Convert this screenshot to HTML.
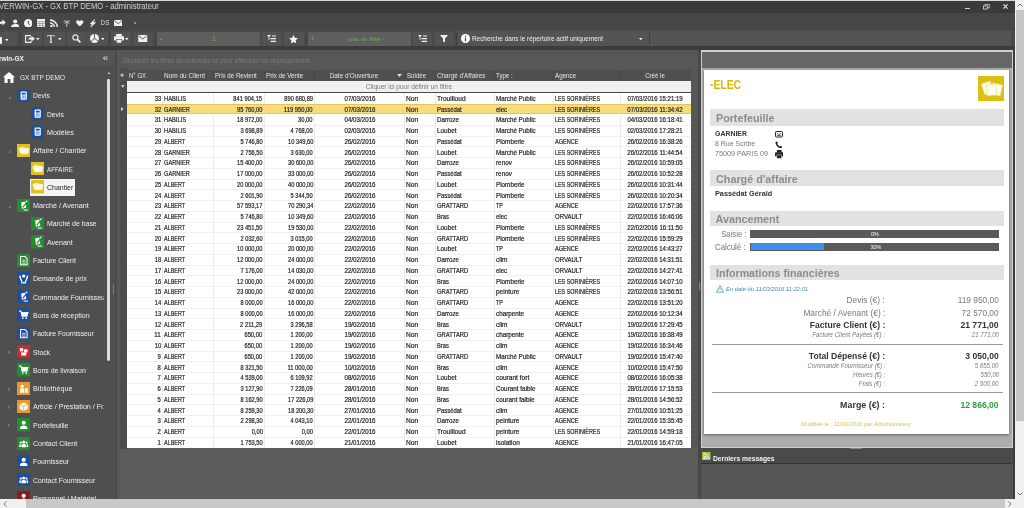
<!DOCTYPE html>
<html lang="fr"><head><meta charset="utf-8"><title>EVERWIN-GX - GX BTP DEMO - administrateur</title>
<style>
html,body{margin:0;padding:0}
body{width:1024px;height:508px;overflow:hidden;position:relative;background:#555;font-family:"Liberation Sans",sans-serif}
#app div,#app span.t,#app svg{position:absolute}
#app span.t{white-space:nowrap;line-height:12px;height:12px}
#app{position:absolute;left:0;top:0;width:1024px;height:508px;overflow:hidden;will-change:transform}
</style></head><body><div id="app">
<div style="left:0px;top:0px;width:1015px;height:1px;background:#d8d8d8;"></div>
<div style="left:0px;top:1px;width:1015px;height:12px;background:#3a3a3a;"></div>
<div style="left:0px;top:13px;width:1015px;height:17px;background:#464646;"></div>
<div style="left:0px;top:30px;width:1015px;height:16px;background:#4a4a4a;"></div>
<div style="left:0px;top:46px;width:1015px;height:4px;background:#3c3c3c;"></div>
<div style="left:0px;top:50px;width:1015px;height:449px;background:#555555;"></div>
<span class="t" style="top:0.3px;font-size:8.6px;color:#d0d0d0;left:-1px;transform-origin:0 50%;transform:scaleX(0.894);">VERWIN-GX - GX BTP DEMO - administrateur</span>
<div style="left:965px;top:7.6px;width:4.5px;height:1px;background:#d4d4d4;"></div>
<svg style="left:982.5px;top:3.5px" width="7" height="6.2" viewBox="0 0 9 8"><rect x="0.5" y="2.5" width="5" height="4" fill="none" stroke="#ddd" stroke-width="1"/><path d="M2.5 2.5V0.5H8V5H5.5" fill="none" stroke="#ddd" stroke-width="1"/></svg>
<svg style="left:1002.5px;top:4px" width="5" height="5" viewBox="0 0 6 6"><path d="M0.5 0.5L5.5 5.5M5.5 0.5L0.5 5.5" stroke="#e0e0e0" stroke-width="1.4"/></svg>
<svg style="left:-3.4px;top:19px" width="9" height="8.5" viewBox="0 0 9 9"><path d="M0.5 8.5C0.8 4.2 3.2 2.4 5.6 2.4V0.2L9 3.6L5.6 7V4.8C3.6 4.8 1.8 5.8 0.5 8.5Z" fill="#f2f2f2"/></svg>
<svg style="left:10.7px;top:18.8px" width="8.4" height="8.6" viewBox="0 0 9 9"><circle cx="4.5" cy="2.5" r="2.2" fill="#f2f2f2"/><path d="M0 9C0 6 2 5.2 4.5 5.2S9 6 9 9Z" fill="#f2f2f2"/></svg>
<svg style="left:23.7px;top:18.8px" width="8.5" height="8.5" viewBox="0 0 9 9"><circle cx="4.5" cy="4.5" r="4.5" fill="#f2f2f2"/><path d="M4.5 2V4.8L6.3 6" fill="none" stroke="#444" stroke-width="1"/></svg>
<svg style="left:36.5px;top:18.8px" width="8.5" height="8.5" viewBox="0 0 9 9"><rect width="9" height="9" fill="#f2f2f2"/><path d="M0 2.6H9M3 2.6V9M6 2.6V9M0 4.8H9M0 7H9" stroke="#666" stroke-width=".5" fill="none"/></svg>
<svg style="left:49.6px;top:18.8px" width="8.3" height="8.5" viewBox="0 0 9 9"><circle cx="1.4" cy="7.6" r="1.3" fill="#f2f2f2"/><path d="M0 4.3A4.7 4.7 0 0 1 4.7 9M0 1A8 8 0 0 1 8 9" fill="none" stroke="#f2f2f2" stroke-width="1.5"/></svg>
<svg style="left:63.3px;top:19px" width="7.4" height="8" viewBox="0 0 9 9"><path d="M4.8 3.5C5 5.5 4.8 7 4.3 9" stroke="#f2f2f2" stroke-width="1" fill="none"/><path d="M4.8 3.2C3.5 1.5 2 1.5 0.8 2.6M4.8 3.2C6 1.3 7.6 1.5 8.6 2.8M4.8 3.2C3.6 3 2.4 3.8 2 5.2M4.8 3.2C6 3 7 3.8 7.4 5.2" stroke="#f2f2f2" stroke-width=".9" fill="none"/></svg>
<svg style="left:76px;top:19.6px" width="7.5" height="6.6" viewBox="0 0 10 9"><path d="M5 9L0.8 4.6C-0.6 3 0.2 0.4 2.5 0.4C3.8 0.4 4.6 1.2 5 2C5.4 1.2 6.2 0.4 7.5 0.4C9.8 0.4 10.6 3 9.2 4.6Z" fill="#f2f2f2"/></svg>
<svg style="left:89px;top:18.7px" width="7.4" height="8.6" viewBox="0 0 7 9"><path d="M5.8 0L0.6 5.2H3L1 9L6.8 3.6H4.2Z" fill="#f2f2f2" stroke="#f2f2f2" stroke-width=".4"/></svg>
<span class="t" style="top:17px;font-size:7px;color:#d8d8d8;left:-195px;width:600px;text-align:center;transform-origin:50% 50%;transform:scaleX(0.9);">DS</span>
<svg style="left:114px;top:19.7px" width="8.4" height="6.4" viewBox="0 0 9 7"><rect width="9" height="7" rx=".6" fill="#f2f2f2"/><path d="M0.6 0.8L4.5 4L8.4 0.8" stroke="#444" stroke-width=".9" fill="none"/></svg>
<div style="left:133.6px;top:22px;width:2.2px;height:2px;background:#8c8c8c;"></div>
<div style="left:0px;top:31.5px;width:17px;height:14px;background:#525252;border-radius:1px"></div>
<div style="left:-2px;top:36.5px;width:3.9px;height:7.5px;background:#f2f2f2;border-radius:1px"></div>
<svg style="left:4.7px;top:39px" width="3.6" height="2.2" viewBox="0 0 4 2.4"><path d="M0 0H4L2 2.4Z" fill="#f2f2f2"/></svg>
<div style="left:19.3px;top:33px;width:1px;height:12px;background:#3e3e3e;"></div>
<div style="left:22.5px;top:31.5px;width:19px;height:14px;background:#525252;border-radius:1px"></div>
<svg style="left:25px;top:34.5px" width="10" height="8" viewBox="0 0 10 8"><path d="M6 0.6H0.6V7.4H6V6" fill="none" stroke="#f2f2f2" stroke-width="1.1"/><path d="M3 4.6C3.6 3 5 2.4 6.4 2.6V1L10 3.8L6.4 6.6V4.8C5 4.6 4 4.6 3 4.6Z" fill="#f2f2f2"/></svg>
<svg style="left:36.2px;top:38px" width="3.6" height="2.2" viewBox="0 0 4 2.4"><path d="M0 0H4L2 2.4Z" fill="#f2f2f2"/></svg>
<div style="left:44px;top:31.5px;width:21px;height:14px;background:#525252;border-radius:1px"></div>
<span class="t" style="top:32.5px;font-size:12px;color:#f2f2f2;left:-249px;width:600px;text-align:center;transform-origin:50% 50%;font-family:&quot;Liberation Serif&quot;,serif;">T</span>
<svg style="left:57.7px;top:38px" width="3.6" height="2.2" viewBox="0 0 4 2.4"><path d="M0 0H4L2 2.4Z" fill="#f2f2f2"/></svg>
<div style="left:66.5px;top:31.5px;width:19px;height:14px;background:#525252;border-radius:1px"></div>
<svg style="left:71.5px;top:34px" width="9" height="9" viewBox="0 0 9 9"><circle cx="3.4" cy="3.4" r="2.6" fill="none" stroke="#f2f2f2" stroke-width="1.2"/><path d="M5.4 5.4L8.4 8.4" stroke="#f2f2f2" stroke-width="1.6"/></svg>
<div style="left:87px;top:31.5px;width:21px;height:14px;background:#525252;border-radius:1px"></div>
<svg style="left:89.5px;top:34px" width="9" height="9" viewBox="0 0 9 9"><circle cx="4.5" cy="4.5" r="4.5" fill="#f2f2f2"/><path d="M4.5 0V4.5L8.3 7M4.5 4.5L1 7.4" stroke="#4a4a4a" stroke-width=".9" fill="none"/></svg>
<svg style="left:100.7px;top:38px" width="3.6" height="2.2" viewBox="0 0 4 2.4"><path d="M0 0H4L2 2.4Z" fill="#f2f2f2"/></svg>
<div style="left:109px;top:33px;width:1px;height:12px;background:#3e3e3e;"></div>
<div style="left:111px;top:31.5px;width:20px;height:14px;background:#525252;border-radius:1px"></div>
<svg style="left:114px;top:34px" width="10" height="9" viewBox="0 0 10 9"><rect x="2.2" y="0" width="5.6" height="2.4" fill="#f2f2f2"/><rect x="0" y="2.2" width="10" height="4.4" rx=".8" fill="#f2f2f2"/><rect x="2.2" y="5.4" width="5.6" height="3.6" fill="#f2f2f2" stroke="#4a4a4a" stroke-width=".6"/></svg>
<svg style="left:125.2px;top:38px" width="3.6" height="2.2" viewBox="0 0 4 2.4"><path d="M0 0H4L2 2.4Z" fill="#f2f2f2"/></svg>
<div style="left:133.5px;top:31.5px;width:19px;height:14px;background:#525252;border-radius:1px"></div>
<svg style="left:138px;top:35px" width="9.5" height="7" viewBox="0 0 9 7"><rect width="9" height="7" rx=".6" fill="#f2f2f2"/><path d="M0.6 0.8L4.5 4L8.4 0.8" stroke="#4a4a4a" stroke-width=".9" fill="none"/></svg>
<div style="left:154.5px;top:33px;width:1px;height:12px;background:#3e3e3e;"></div>
<div style="left:156.5px;top:32px;width:103.5px;height:13.5px;background:#5e5e5e;"></div>
<span class="t" style="top:32.5px;font-size:6px;color:#6fb04a;left:-139px;width:600px;text-align:center;transform-origin:50% 50%;">•</span>
<span class="t" style="top:32.5px;font-size:6.5px;color:#6fb04a;left:-86px;width:600px;text-align:center;transform-origin:50% 50%;">1</span>
<div style="left:262px;top:31.5px;width:19px;height:14px;background:#525252;border-radius:1px"></div>
<svg style="left:267px;top:35px" width="9" height="7.5" viewBox="0 0 9 7.5"><path d="M0 0H4L2 2.2Z" fill="#f2f2f2"/><path d="M2 2V5" stroke="#f2f2f2" stroke-width=".8"/><path d="M5 1H9M3.6 3.6H9M3.6 6.4H9" stroke="#f2f2f2" stroke-width="1.1"/></svg>
<div style="left:283.5px;top:31.5px;width:20px;height:14px;background:#525252;border-radius:1px"></div>
<svg style="left:289px;top:34.5px" width="9" height="8.5" viewBox="0 0 10 9.5"><path d="M5 0L6.5 3.2L10 3.6L7.4 6L8.1 9.5L5 7.7L1.9 9.5L2.6 6L0 3.6L3.5 3.2Z" fill="#f2f2f2"/></svg>
<div style="left:305.5px;top:33px;width:1px;height:12px;background:#3e3e3e;"></div>
<div style="left:307.5px;top:32px;width:103.5px;height:13.5px;background:#5e5e5e;"></div>
<span class="t" style="top:32.5px;font-size:7px;color:#6fb04a;left:12.5px;width:600px;text-align:center;transform-origin:50% 50%;">+</span>
<span class="t" style="top:32.5px;font-size:6.2px;color:#6fb04a;left:64.5px;width:600px;text-align:center;transform-origin:50% 50%;transform:scaleX(0.981);">- pas de filtre -</span>
<div style="left:412.5px;top:31.5px;width:19.5px;height:14px;background:#525252;border-radius:1px"></div>
<svg style="left:418px;top:35px" width="9" height="7.5" viewBox="0 0 9 7.5"><path d="M0 0H4L2 2.2Z" fill="#f2f2f2"/><path d="M2 2V5" stroke="#f2f2f2" stroke-width=".8"/><path d="M5 1H9M3.6 3.6H9M3.6 6.4H9" stroke="#f2f2f2" stroke-width="1.1"/></svg>
<div style="left:434.5px;top:31.5px;width:19px;height:14px;background:#525252;border-radius:1px"></div>
<svg style="left:440px;top:35px" width="8" height="7.5" viewBox="0 0 8 7.5"><path d="M0 0H8L5 3.4V7.5L3 6.2V3.4Z" fill="#f2f2f2"/></svg>
<div style="left:456px;top:33px;width:1px;height:12px;background:#3e3e3e;"></div>
<div style="left:458px;top:31px;width:553px;height:15px;background:#545454;"></div>
<svg style="left:461px;top:34px" width="9" height="9" viewBox="0 0 9 9"><circle cx="4.5" cy="4.5" r="4.5" fill="#fff"/><rect x="3.9" y="3.6" width="1.2" height="3.6" fill="#444"/><rect x="3.9" y="1.7" width="1.2" height="1.2" fill="#444"/></svg>
<span class="t" style="top:32.5px;font-size:6.7px;color:#f0f0f0;left:472px;transform-origin:0 50%;transform:scaleX(0.956);">Recherche dans le répertoire actif uniquement</span>
<svg style="left:639.2px;top:38px" width="3.6" height="2.2" viewBox="0 0 4 2.4"><path d="M0 0H4L2 2.4Z" fill="#f2f2f2"/></svg>
<div style="left:649px;top:33px;width:1px;height:12px;background:#3e3e3e;"></div>
<div style="left:0px;top:50px;width:114.5px;height:449px;background:#4f4f4f;"></div>
<div style="left:0px;top:50px;width:114.5px;height:16px;background:#545454;"></div>
<div style="left:114.5px;top:50px;width:2.5px;height:449px;background:#4a4a4a;"></div>
<span class="t" style="top:52.5px;font-size:7px;color:#f0f0f0;font-weight:bold;left:-1.5px;transform-origin:0 50%;transform:scaleX(0.926);">rwin-GX</span>
<span class="t" style="top:51.8px;font-size:9.5px;color:#e8e8e8;left:-194.7px;width:600px;text-align:center;transform-origin:50% 50%;">«</span>
<svg style="left:3px;top:72.2px" width="12" height="11" viewBox="0 0 12 11"><path d="M6 0L0 5.2H1.6V11H4.6V7H7.4V11H10.4V5.2H12Z" fill="#fff"/></svg>
<span class="t" style="top:71.7px;font-size:6.6px;color:#e8e8e8;left:20px;transform-origin:0 50%;transform:scaleX(0.985);">GX BTP DEMO</span>
<svg style="left:16.6px;top:88.8px" width="13.4" height="13.4" viewBox="0 0 13 13"><rect width="13" height="13" fill="#1c4f9c"/><rect x="3.5" y="2.5" width="6" height="8" rx="1" fill="#fff"/><rect x="4.6" y="3.6" width="3.8" height="1.8" fill="#1c4f9c"/><rect x="4.6" y="6.4" width="1" height="1" fill="#1c4f9c"/><rect x="6" y="6.4" width="1" height="1" fill="#1c4f9c"/><rect x="7.4" y="6.4" width="1" height="1" fill="#1c4f9c"/><rect x="4.6" y="8.2" width="1" height="1" fill="#1c4f9c"/><rect x="6" y="8.2" width="1" height="1" fill="#1c4f9c"/><rect x="7.4" y="8.2" width="1" height="1" fill="#1c4f9c"/></svg>
<span class="t" style="top:90.3px;font-size:7.4px;color:#f0f0f0;left:32.5px;transform-origin:0 50%;transform:scaleX(0.909);">Devis</span>
<svg style="left:8px;top:95.5px" width="3" height="3" viewBox="0 0 4 4"><path d="M4 0V4H0Z" fill="#707070"/></svg>
<svg style="left:30.8px;top:107.1px" width="13.4" height="13.4" viewBox="0 0 13 13"><rect width="13" height="13" fill="#1c4f9c"/><rect x="3.5" y="2.5" width="6" height="8" rx="1" fill="#fff"/><rect x="4.6" y="3.6" width="3.8" height="1.8" fill="#1c4f9c"/><rect x="4.6" y="6.4" width="1" height="1" fill="#1c4f9c"/><rect x="6" y="6.4" width="1" height="1" fill="#1c4f9c"/><rect x="7.4" y="6.4" width="1" height="1" fill="#1c4f9c"/><rect x="4.6" y="8.2" width="1" height="1" fill="#1c4f9c"/><rect x="6" y="8.2" width="1" height="1" fill="#1c4f9c"/><rect x="7.4" y="8.2" width="1" height="1" fill="#1c4f9c"/></svg>
<span class="t" style="top:108.6px;font-size:7.4px;color:#f0f0f0;left:47px;transform-origin:0 50%;transform:scaleX(0.909);">Devis</span>
<svg style="left:30.8px;top:125.4px" width="13.4" height="13.4" viewBox="0 0 13 13"><rect width="13" height="13" fill="#1c4f9c"/><rect x="3.5" y="2.5" width="6" height="8" rx="1" fill="#fff"/><rect x="4.6" y="3.6" width="3.8" height="1.8" fill="#1c4f9c"/><rect x="4.6" y="6.4" width="1" height="1" fill="#1c4f9c"/><rect x="6" y="6.4" width="1" height="1" fill="#1c4f9c"/><rect x="7.4" y="6.4" width="1" height="1" fill="#1c4f9c"/><rect x="4.6" y="8.2" width="1" height="1" fill="#1c4f9c"/><rect x="6" y="8.2" width="1" height="1" fill="#1c4f9c"/><rect x="7.4" y="8.2" width="1" height="1" fill="#1c4f9c"/></svg>
<span class="t" style="top:126.9px;font-size:7.4px;color:#f0f0f0;left:47px;transform-origin:0 50%;transform:scaleX(0.961);">Modèles</span>
<svg style="left:16.6px;top:143.7px" width="13.4" height="13.4" viewBox="0 0 13 13"><rect width="13" height="13" fill="#e0c11f"/><g fill="#fffdf0" stroke="#ecd96c" stroke-width=".3"><rect x="2.2" y="3.2" width="4.8" height="5.6" transform="rotate(-18 4.6 6)"/><rect x="6.4" y="3.8" width="5" height="5.6" transform="rotate(12 8.9 6.6)"/><rect x="4" y="4.4" width="4.8" height="5.4" transform="rotate(-5 6.4 7)"/></g></svg>
<span class="t" style="top:145.2px;font-size:7.4px;color:#f0f0f0;left:32.5px;transform-origin:0 50%;transform:scaleX(0.967);">Affaire / Chantier</span>
<svg style="left:8px;top:150.4px" width="3" height="3" viewBox="0 0 4 4"><path d="M4 0V4H0Z" fill="#707070"/></svg>
<svg style="left:30.8px;top:162px" width="13.4" height="13.4" viewBox="0 0 13 13"><rect width="13" height="13" fill="#e0c11f"/><g fill="#fffdf0" stroke="#ecd96c" stroke-width=".3"><rect x="2.2" y="3.2" width="4.8" height="5.6" transform="rotate(-18 4.6 6)"/><rect x="6.4" y="3.8" width="5" height="5.6" transform="rotate(12 8.9 6.6)"/><rect x="4" y="4.4" width="4.8" height="5.4" transform="rotate(-5 6.4 7)"/></g></svg>
<span class="t" style="top:163.5px;font-size:7.4px;color:#f0f0f0;left:47px;transform-origin:0 50%;transform:scaleX(0.837);">AFFAIRE</span>
<div style="left:29.7px;top:179px;width:45.3px;height:17px;background:#f4f4f4;"></div>
<svg style="left:30.8px;top:180.3px" width="13.4" height="13.4" viewBox="0 0 13 13"><rect width="13" height="13" fill="#e0c11f"/><g fill="#fffdf0" stroke="#ecd96c" stroke-width=".3"><rect x="2.2" y="3.2" width="4.8" height="5.6" transform="rotate(-18 4.6 6)"/><rect x="6.4" y="3.8" width="5" height="5.6" transform="rotate(12 8.9 6.6)"/><rect x="4" y="4.4" width="4.8" height="5.4" transform="rotate(-5 6.4 7)"/></g></svg>
<span class="t" style="top:181.8px;font-size:7.4px;color:#222;left:47px;transform-origin:0 50%;transform:scaleX(0.942);">Chantier</span>
<svg style="left:16.6px;top:198.6px" width="13.4" height="13.4" viewBox="0 0 13 13"><rect width="13" height="13" fill="#258c32"/><path d="M4 3.4L8.2 2.4L9 8.4L4.8 9.4Z" fill="#fff"/><path d="M5.6 8.2L9.6 3" stroke="#258c32" stroke-width="1.1"/><path d="M8.8 3L10 1.5" stroke="#fff" stroke-width="1.1"/><path d="M6.4 10.7H10.6" stroke="#fff" stroke-width="1"/></svg>
<span class="t" style="top:200.1px;font-size:7.4px;color:#f0f0f0;left:32.5px;transform-origin:0 50%;transform:scaleX(0.973);">Marché / Avenant</span>
<svg style="left:8px;top:205.3px" width="3" height="3" viewBox="0 0 4 4"><path d="M4 0V4H0Z" fill="#707070"/></svg>
<svg style="left:30.8px;top:216.9px" width="13.4" height="13.4" viewBox="0 0 13 13"><rect width="13" height="13" fill="#258c32"/><path d="M4 3.4L8.2 2.4L9 8.4L4.8 9.4Z" fill="#fff"/><path d="M5.6 8.2L9.6 3" stroke="#258c32" stroke-width="1.1"/><path d="M8.8 3L10 1.5" stroke="#fff" stroke-width="1.1"/><path d="M6.4 10.7H10.6" stroke="#fff" stroke-width="1"/></svg>
<span class="t" style="top:218.4px;font-size:7.4px;color:#f0f0f0;left:47px;transform-origin:0 50%;transform:scaleX(0.938);">Marché de base</span>
<svg style="left:30.8px;top:235.2px" width="13.4" height="13.4" viewBox="0 0 13 13"><rect width="13" height="13" fill="#258c32"/><path d="M4 3.4L8.2 2.4L9 8.4L4.8 9.4Z" fill="#fff"/><path d="M5.6 8.2L9.6 3" stroke="#258c32" stroke-width="1.1"/><path d="M8.8 3L10 1.5" stroke="#fff" stroke-width="1.1"/><path d="M6.4 10.7H10.6" stroke="#fff" stroke-width="1"/></svg>
<span class="t" style="top:236.7px;font-size:7.4px;color:#f0f0f0;left:47px;transform-origin:0 50%;transform:scaleX(0.953);">Avenant</span>
<svg style="left:16.6px;top:253.5px" width="13.4" height="13.4" viewBox="0 0 13 13"><rect width="13" height="13" fill="#258c32"/><path d="M3.5 2.5H7.8L9.8 4.5V10.5H3.5Z" fill="none" stroke="#fff" stroke-width="1"/><path d="M5 6H8.3M5 7.5H8.3M5 9H8.3" stroke="#fff" stroke-width=".7"/></svg>
<span class="t" style="top:255px;font-size:7.4px;color:#f0f0f0;left:32.5px;transform-origin:0 50%;transform:scaleX(0.931);">Facture Client</span>
<svg style="left:16.6px;top:271.8px" width="13.4" height="13.4" viewBox="0 0 13 13"><rect width="13" height="13" fill="#1c4f9c"/><circle cx="6.5" cy="4" r="1.6" fill="#fff"/><path d="M2.8 3.5C3 7 4.5 7.5 5 10.5H8C8.5 7.5 10 7 10.2 3.5" fill="none" stroke="#fff" stroke-width="1.3"/></svg>
<span class="t" style="top:273.3px;font-size:7.4px;color:#f0f0f0;left:32.5px;transform-origin:0 50%;transform:scaleX(0.954);">Demande de prix</span>
<svg style="left:16.6px;top:290.1px" width="13.4" height="13.4" viewBox="0 0 13 13"><rect width="13" height="13" fill="#1c4f9c"/><path d="M4 3.4L8.2 2.4L9 8.4L4.8 9.4Z" fill="#fff"/><path d="M5.6 8.2L9.6 3" stroke="#1c4f9c" stroke-width="1.1"/><path d="M8.8 3L10 1.5" stroke="#fff" stroke-width="1.1"/><path d="M6.4 10.7H10.6" stroke="#fff" stroke-width="1"/></svg>
<span class="t" style="top:291.6px;font-size:7.4px;color:#f0f0f0;left:32.5px;transform-origin:0 50%;transform:scaleX(0.936);">Commande Fournisseur</span>
<svg style="left:16.6px;top:308.4px" width="13.4" height="13.4" viewBox="0 0 13 13"><rect width="13" height="13" fill="#1c4f9c"/><path d="M2 3H3.8L5 8H9.5L10.6 4.4H4.3" fill="none" stroke="#fff" stroke-width="1.1"/><rect x="4.6" y="4.6" width="5.4" height="3" fill="#fff"/><circle cx="5.6" cy="9.8" r=".9" fill="#fff"/><circle cx="9" cy="9.8" r=".9" fill="#fff"/></svg>
<span class="t" style="top:309.9px;font-size:7.4px;color:#f0f0f0;left:32.5px;transform-origin:0 50%;transform:scaleX(0.951);">Bons de réception</span>
<svg style="left:16.6px;top:326.7px" width="13.4" height="13.4" viewBox="0 0 13 13"><rect width="13" height="13" fill="#1c4f9c"/><path d="M3.5 2.5H7.8L9.8 4.5V10.5H3.5Z" fill="none" stroke="#fff" stroke-width="1"/><path d="M5 6H8.3M5 7.5H8.3M5 9H8.3" stroke="#fff" stroke-width=".7"/></svg>
<span class="t" style="top:328.2px;font-size:7.4px;color:#f0f0f0;left:32.5px;transform-origin:0 50%;transform:scaleX(0.921);">Facture Fournisseur</span>
<svg style="left:16.6px;top:345px" width="13.4" height="13.4" viewBox="0 0 13 13"><rect width="13" height="13" fill="#cc2a2a"/><rect x="2.8" y="3" width="3.2" height="3.2" fill="#fff"/><rect x="6.8" y="4.2" width="3.4" height="3" fill="#fff"/><rect x="4" y="7.2" width="5" height="3" fill="#fff"/></svg>
<span class="t" style="top:346.5px;font-size:7.4px;color:#f0f0f0;left:32.5px;transform-origin:0 50%;transform:scaleX(0.926);">Stock</span>
<svg style="left:8px;top:350px" width="2.6" height="4.4" viewBox="0 0 3 5"><path d="M0 0L3 2.5L0 5Z" fill="#727272"/></svg>
<svg style="left:16.6px;top:363.3px" width="13.4" height="13.4" viewBox="0 0 13 13"><rect width="13" height="13" fill="#258c32"/><path d="M2 3H3.8L5 8H9.5L10.6 4.4H4.3" fill="none" stroke="#fff" stroke-width="1.1"/><rect x="4.6" y="4.6" width="5.4" height="3" fill="#fff"/><circle cx="5.6" cy="9.8" r=".9" fill="#fff"/><circle cx="9" cy="9.8" r=".9" fill="#fff"/></svg>
<span class="t" style="top:364.8px;font-size:7.4px;color:#f0f0f0;left:32.5px;transform-origin:0 50%;transform:scaleX(0.938);">Bons de livraison</span>
<svg style="left:16.6px;top:381.6px" width="13.4" height="13.4" viewBox="0 0 13 13"><rect width="13" height="13" fill="#e8982e"/><circle cx="5" cy="4.2" r="1.5" fill="#fff"/><path d="M3 10.5V7.5C3 6.4 4 6 5 6S7 6.4 7 7.5V10.5Z" fill="#fff"/><rect x="7.6" y="6" width="3" height="4.5" fill="#fff" opacity=".9"/></svg>
<span class="t" style="top:383.1px;font-size:7.4px;color:#f0f0f0;left:32.5px;transform-origin:0 50%;transform:scaleX(0.972);">Bibliothèque</span>
<svg style="left:8px;top:386.6px" width="2.6" height="4.4" viewBox="0 0 3 5"><path d="M0 0L3 2.5L0 5Z" fill="#727272"/></svg>
<svg style="left:16.6px;top:399.9px" width="13.4" height="13.4" viewBox="0 0 13 13"><rect width="13" height="13" fill="#e8982e"/><path d="M6.5 2.5L10.5 4.3V8.8L6.5 10.8L2.5 8.8V4.3Z" fill="#fff" opacity=".95"/><path d="M2.5 4.3L6.5 6.2L10.5 4.3M6.5 6.2V10.8" fill="none" stroke="#e8982e" stroke-width=".7"/></svg>
<span class="t" style="top:401.4px;font-size:7.4px;color:#f0f0f0;left:32.5px;transform-origin:0 50%;transform:scaleX(0.964);">Article / Prestation / Fr.</span>
<svg style="left:8px;top:404.9px" width="2.6" height="4.4" viewBox="0 0 3 5"><path d="M0 0L3 2.5L0 5Z" fill="#727272"/></svg>
<svg style="left:16.6px;top:418.2px" width="13.4" height="13.4" viewBox="0 0 13 13"><rect width="13" height="13" fill="#258c32"/><circle cx="6.5" cy="4.6" r="2" fill="#fff"/><path d="M2.8 10.6C2.8 8 4.5 7.3 6.5 7.3S10.2 8 10.2 10.6Z" fill="#fff"/></svg>
<span class="t" style="top:419.7px;font-size:7.4px;color:#f0f0f0;left:32.5px;transform-origin:0 50%;transform:scaleX(0.96);">Portefeuille</span>
<svg style="left:8px;top:423.2px" width="2.6" height="4.4" viewBox="0 0 3 5"><path d="M0 0L3 2.5L0 5Z" fill="#727272"/></svg>
<svg style="left:16.6px;top:436.5px" width="13.4" height="13.4" viewBox="0 0 13 13"><rect width="13" height="13" fill="#258c32"/><circle cx="6.5" cy="4.8" r="1.5" fill="#fff"/><circle cx="3.7" cy="5.4" r="1.1" fill="#fff"/><circle cx="9.3" cy="5.4" r="1.1" fill="#fff"/><path d="M4.3 10V8.4C4.3 7.2 5.3 6.8 6.5 6.8S8.7 7.2 8.7 8.4V10Z" fill="#fff"/><path d="M2.2 9.6V8.2C2.2 7.4 2.9 7 3.7 7V9.6ZM10.8 9.6V8.2C10.8 7.4 10.1 7 9.3 7V9.6Z" fill="#fff"/></svg>
<span class="t" style="top:438px;font-size:7.4px;color:#f0f0f0;left:32.5px;transform-origin:0 50%;transform:scaleX(0.951);">Contact Client</span>
<svg style="left:16.6px;top:454.8px" width="13.4" height="13.4" viewBox="0 0 13 13"><rect width="13" height="13" fill="#1c4f9c"/><circle cx="6.5" cy="4.6" r="2" fill="#fff"/><path d="M2.8 10.6C2.8 8 4.5 7.3 6.5 7.3S10.2 8 10.2 10.6Z" fill="#fff"/></svg>
<span class="t" style="top:456.3px;font-size:7.4px;color:#f0f0f0;left:32.5px;transform-origin:0 50%;transform:scaleX(0.923);">Fournisseur</span>
<svg style="left:16.6px;top:473.1px" width="13.4" height="13.4" viewBox="0 0 13 13"><rect width="13" height="13" fill="#1c4f9c"/><circle cx="6.5" cy="4.8" r="1.5" fill="#fff"/><circle cx="3.7" cy="5.4" r="1.1" fill="#fff"/><circle cx="9.3" cy="5.4" r="1.1" fill="#fff"/><path d="M4.3 10V8.4C4.3 7.2 5.3 6.8 6.5 6.8S8.7 7.2 8.7 8.4V10Z" fill="#fff"/><path d="M2.2 9.6V8.2C2.2 7.4 2.9 7 3.7 7V9.6ZM10.8 9.6V8.2C10.8 7.4 10.1 7 9.3 7V9.6Z" fill="#fff"/></svg>
<span class="t" style="top:474.6px;font-size:7.4px;color:#f0f0f0;left:32.5px;transform-origin:0 50%;transform:scaleX(0.935);">Contact Fournisseur</span>
<svg style="left:16.6px;top:491.4px" width="13.4" height="13.4" viewBox="0 0 13 13"><rect width="13" height="13" fill="#8a1c1c"/><circle cx="6.5" cy="4.6" r="2" fill="#fff"/><path d="M2.8 10.6C2.8 8 4.5 7.3 6.5 7.3S10.2 8 10.2 10.6Z" fill="#fff"/></svg>
<span class="t" style="top:492.9px;font-size:7.4px;color:#f0f0f0;left:32.5px;transform-origin:0 50%;transform:scaleX(0.96);">Personnel / Matériel</span>
<div style="left:103.5px;top:66px;width:11px;height:433px;background:#4f4f4f;"></div>
<div style="left:106.8px;top:78.5px;width:3px;height:282.3px;background:#dcdcdc;border-radius:1.4px"></div>
<svg style="left:106.5px;top:71.5px" width="4" height="2.6" viewBox="0 0 5 3"><path d="M0 3H5L2.5 0Z" fill="#c8c8c8"/></svg>
<div style="left:113px;top:284px;width:1px;height:10px;background:#777;"></div>
<div style="left:117px;top:50px;width:580.8px;height:449px;background:#575757;"></div>
<div style="left:119.5px;top:448px;width:578.3px;height:51px;background:#5b5b5b;"></div>
<div style="left:119.5px;top:68px;width:7.7px;height:381px;background:#4c4c4c;"></div>
<span class="t" style="top:54.5px;font-size:6.6px;color:#7c7c7c;left:122.5px;transform-origin:0 50%;transform:scaleX(0.971);">Déplacer les titres de colonnes ici pour effectuer un regroupement</span>
<div style="left:119.5px;top:69.5px;width:571.5px;height:11.5px;background:#4f4f4f;"></div>
<div style="left:161.5px;top:70.5px;width:1px;height:9.5px;background:#464646;"></div>
<div style="left:213px;top:70.5px;width:1px;height:9.5px;background:#464646;"></div>
<div style="left:263.5px;top:70.5px;width:1px;height:9.5px;background:#464646;"></div>
<div style="left:314px;top:70.5px;width:1px;height:9.5px;background:#464646;"></div>
<div style="left:403.9px;top:70.5px;width:1px;height:9.5px;background:#464646;"></div>
<div style="left:434.5px;top:70.5px;width:1px;height:9.5px;background:#464646;"></div>
<div style="left:493.7px;top:70.5px;width:1px;height:9.5px;background:#464646;"></div>
<div style="left:552.9px;top:70.5px;width:1px;height:9.5px;background:#464646;"></div>
<div style="left:619.5px;top:70.5px;width:1px;height:9.5px;background:#464646;"></div>
<span class="t" style="top:69.5px;font-size:6.6px;color:#e4e4e4;left:129px;transform-origin:0 50%;transform:scaleX(0.912);">N° GX</span>
<span class="t" style="top:69.5px;font-size:6.6px;color:#e4e4e4;left:163.5px;transform-origin:0 50%;transform:scaleX(0.984);">Nom du Client</span>
<span class="t" style="top:69.5px;font-size:6.6px;color:#e4e4e4;left:215px;transform-origin:0 50%;transform:scaleX(0.935);">Prix de Revient</span>
<span class="t" style="top:69.5px;font-size:6.6px;color:#e4e4e4;left:265.5px;transform-origin:0 50%;transform:scaleX(0.952);">Prix de Vente</span>
<span class="t" style="top:69.5px;font-size:6.6px;color:#e4e4e4;left:53.5px;width:600px;text-align:center;transform-origin:50% 50%;transform:scaleX(0.973);">Date d&#x27;Ouverture</span>
<span class="t" style="top:69.5px;font-size:6.6px;color:#e4e4e4;left:406.5px;transform-origin:0 50%;transform:scaleX(0.932);">Soldée</span>
<span class="t" style="top:69.5px;font-size:6.6px;color:#e4e4e4;left:436.5px;transform-origin:0 50%;transform:scaleX(0.955);">Chargé d&#x27;Affaires</span>
<span class="t" style="top:69.5px;font-size:6.6px;color:#e4e4e4;left:496px;transform-origin:0 50%;transform:scaleX(0.929);">Type :</span>
<span class="t" style="top:69.5px;font-size:6.6px;color:#e4e4e4;left:555px;transform-origin:0 50%;transform:scaleX(0.946);">Agence</span>
<span class="t" style="top:69.5px;font-size:6.6px;color:#e4e4e4;left:355px;width:600px;text-align:center;transform-origin:50% 50%;transform:scaleX(0.918);">Créé le</span>
<svg style="left:397px;top:74px" width="5" height="3" viewBox="0 0 5 3"><path d="M0 0H5L2.5 3Z" fill="#ddd"/></svg>
<span class="t" style="top:69.5px;font-size:4.5px;color:#ccc;left:-178px;width:600px;text-align:center;transform-origin:50% 50%;">✱</span>
<svg style="left:121px;top:85.3px" width="3.6" height="3" viewBox="0 0 5 4"><path d="M0 0H5L2.5 4Z" fill="#d0d0d0"/></svg>
<svg style="left:121.3px;top:106.6px" width="2.6" height="4.2" viewBox="0 0 3 5"><path d="M0 0V5L3 2.5Z" fill="#d8d8d8"/></svg>
<div style="left:127.2px;top:81px;width:563.8px;height:11px;background:#f0f0f0;"></div>
<span class="t" style="top:80.5px;font-size:6.6px;color:#777;left:109px;width:600px;text-align:center;transform-origin:50% 50%;transform:scaleX(0.989);">Cliquer ici pour définir un filtre</span>
<div style="left:127.2px;top:92px;width:563.8px;height:1px;background:#4a4a4a;"></div>
<div style="left:127.2px;top:93px;width:563.8px;height:354.75px;background:#ffffff;"></div>
<div style="left:127.2px;top:103.75px;width:563.8px;height:10.35px;background:#f8db7c;border-top:1px solid #e6c455;border-bottom:1px solid #e6c455;box-sizing:border-box"></div>
<div style="left:127.2px;top:124.75px;width:563.8px;height:1px;background:#f0f0f0;"></div>
<div style="left:127.2px;top:135.5px;width:563.8px;height:1px;background:#f0f0f0;"></div>
<div style="left:127.2px;top:146.25px;width:563.8px;height:1px;background:#f0f0f0;"></div>
<div style="left:127.2px;top:157px;width:563.8px;height:1px;background:#f0f0f0;"></div>
<div style="left:127.2px;top:167.75px;width:563.8px;height:1px;background:#f0f0f0;"></div>
<div style="left:127.2px;top:178.5px;width:563.8px;height:1px;background:#f0f0f0;"></div>
<div style="left:127.2px;top:189.25px;width:563.8px;height:1px;background:#f0f0f0;"></div>
<div style="left:127.2px;top:200px;width:563.8px;height:1px;background:#f0f0f0;"></div>
<div style="left:127.2px;top:210.75px;width:563.8px;height:1px;background:#f0f0f0;"></div>
<div style="left:127.2px;top:221.5px;width:563.8px;height:1px;background:#f0f0f0;"></div>
<div style="left:127.2px;top:232.25px;width:563.8px;height:1px;background:#f0f0f0;"></div>
<div style="left:127.2px;top:243px;width:563.8px;height:1px;background:#f0f0f0;"></div>
<div style="left:127.2px;top:253.75px;width:563.8px;height:1px;background:#f0f0f0;"></div>
<div style="left:127.2px;top:264.5px;width:563.8px;height:1px;background:#f0f0f0;"></div>
<div style="left:127.2px;top:275.25px;width:563.8px;height:1px;background:#f0f0f0;"></div>
<div style="left:127.2px;top:286px;width:563.8px;height:1px;background:#f0f0f0;"></div>
<div style="left:127.2px;top:296.75px;width:563.8px;height:1px;background:#f0f0f0;"></div>
<div style="left:127.2px;top:307.5px;width:563.8px;height:1px;background:#f0f0f0;"></div>
<div style="left:127.2px;top:318.25px;width:563.8px;height:1px;background:#f0f0f0;"></div>
<div style="left:127.2px;top:329px;width:563.8px;height:1px;background:#f0f0f0;"></div>
<div style="left:127.2px;top:339.75px;width:563.8px;height:1px;background:#f0f0f0;"></div>
<div style="left:127.2px;top:350.5px;width:563.8px;height:1px;background:#f0f0f0;"></div>
<div style="left:127.2px;top:361.25px;width:563.8px;height:1px;background:#f0f0f0;"></div>
<div style="left:127.2px;top:372px;width:563.8px;height:1px;background:#f0f0f0;"></div>
<div style="left:127.2px;top:382.75px;width:563.8px;height:1px;background:#f0f0f0;"></div>
<div style="left:127.2px;top:393.5px;width:563.8px;height:1px;background:#f0f0f0;"></div>
<div style="left:127.2px;top:404.25px;width:563.8px;height:1px;background:#f0f0f0;"></div>
<div style="left:127.2px;top:415px;width:563.8px;height:1px;background:#f0f0f0;"></div>
<div style="left:127.2px;top:425.75px;width:563.8px;height:1px;background:#f0f0f0;"></div>
<div style="left:127.2px;top:436.5px;width:563.8px;height:1px;background:#f0f0f0;"></div>
<div style="left:161.5px;top:93px;width:1px;height:10.75px;background:#ebebeb;"></div>
<div style="left:161.5px;top:114.5px;width:1px;height:333.25px;background:#ebebeb;"></div>
<div style="left:213px;top:93px;width:1px;height:10.75px;background:#ebebeb;"></div>
<div style="left:213px;top:114.5px;width:1px;height:333.25px;background:#ebebeb;"></div>
<div style="left:263.5px;top:93px;width:1px;height:10.75px;background:#ebebeb;"></div>
<div style="left:263.5px;top:114.5px;width:1px;height:333.25px;background:#ebebeb;"></div>
<div style="left:314px;top:93px;width:1px;height:10.75px;background:#ebebeb;"></div>
<div style="left:314px;top:114.5px;width:1px;height:333.25px;background:#ebebeb;"></div>
<div style="left:403.9px;top:93px;width:1px;height:10.75px;background:#ebebeb;"></div>
<div style="left:403.9px;top:114.5px;width:1px;height:333.25px;background:#ebebeb;"></div>
<div style="left:434.5px;top:93px;width:1px;height:10.75px;background:#ebebeb;"></div>
<div style="left:434.5px;top:114.5px;width:1px;height:333.25px;background:#ebebeb;"></div>
<div style="left:493.7px;top:93px;width:1px;height:10.75px;background:#ebebeb;"></div>
<div style="left:493.7px;top:114.5px;width:1px;height:333.25px;background:#ebebeb;"></div>
<div style="left:552.9px;top:93px;width:1px;height:10.75px;background:#ebebeb;"></div>
<div style="left:552.9px;top:114.5px;width:1px;height:333.25px;background:#ebebeb;"></div>
<div style="left:619.5px;top:93px;width:1px;height:10.75px;background:#ebebeb;"></div>
<div style="left:619.5px;top:114.5px;width:1px;height:333.25px;background:#ebebeb;"></div>
<span class="t" style="top:92.875px;font-size:6.6px;color:#222;right:863px;transform-origin:100% 50%;transform:scaleX(0.892);-webkit-text-stroke:0.22px #333;">33</span>
<span class="t" style="top:92.875px;font-size:6.6px;color:#222;left:163.5px;transform-origin:0 50%;transform:scaleX(0.87);-webkit-text-stroke:0.22px #333;">HABILIS</span>
<span class="t" style="top:92.875px;font-size:6.6px;color:#222;right:761.5px;transform-origin:100% 50%;transform:scaleX(0.868);-webkit-text-stroke:0.22px #333;">841 904,15</span>
<span class="t" style="top:92.875px;font-size:6.6px;color:#222;right:711px;transform-origin:100% 50%;transform:scaleX(0.868);-webkit-text-stroke:0.22px #333;">890 680,89</span>
<span class="t" style="top:92.875px;font-size:6.6px;color:#222;left:59.5px;width:600px;text-align:center;transform-origin:50% 50%;transform:scaleX(0.943);-webkit-text-stroke:0.22px #333;">07/03/2016</span>
<span class="t" style="top:92.875px;font-size:6.6px;color:#222;left:405.8px;transform-origin:0 50%;transform:scaleX(0.998);-webkit-text-stroke:0.22px #333;">Non</span>
<span class="t" style="top:92.875px;font-size:6.6px;color:#222;left:436.5px;transform-origin:0 50%;transform:scaleX(0.994);-webkit-text-stroke:0.22px #333;">Trouilloud</span>
<span class="t" style="top:92.875px;font-size:6.6px;color:#222;left:496px;transform-origin:0 50%;transform:scaleX(0.949);-webkit-text-stroke:0.22px #333;">Marché Public</span>
<span class="t" style="top:92.875px;font-size:6.6px;color:#222;left:555px;transform-origin:0 50%;transform:scaleX(0.819);-webkit-text-stroke:0.22px #333;">LES SORINIÈRES</span>
<span class="t" style="top:92.875px;font-size:6.6px;color:#222;left:355px;width:600px;text-align:center;transform-origin:50% 50%;transform:scaleX(0.913);-webkit-text-stroke:0.22px #333;">07/03/2016 15:21:19</span>
<span class="t" style="top:103.625px;font-size:6.6px;color:#222;right:863px;transform-origin:100% 50%;transform:scaleX(0.892);-webkit-text-stroke:0.22px #333;">32</span>
<span class="t" style="top:103.625px;font-size:6.6px;color:#222;left:163.5px;transform-origin:0 50%;transform:scaleX(0.856);-webkit-text-stroke:0.22px #333;">GARNIER</span>
<span class="t" style="top:103.625px;font-size:6.6px;color:#222;right:761.5px;transform-origin:100% 50%;transform:scaleX(0.865);-webkit-text-stroke:0.22px #333;">95 760,00</span>
<span class="t" style="top:103.625px;font-size:6.6px;color:#222;right:711px;transform-origin:100% 50%;transform:scaleX(0.881);-webkit-text-stroke:0.22px #333;">119 950,00</span>
<span class="t" style="top:103.625px;font-size:6.6px;color:#222;left:59.5px;width:600px;text-align:center;transform-origin:50% 50%;transform:scaleX(0.943);-webkit-text-stroke:0.22px #333;">07/03/2016</span>
<span class="t" style="top:103.625px;font-size:6.6px;color:#222;left:405.8px;transform-origin:0 50%;transform:scaleX(0.998);-webkit-text-stroke:0.22px #333;">Non</span>
<span class="t" style="top:103.625px;font-size:6.6px;color:#222;left:436.5px;transform-origin:0 50%;transform:scaleX(0.896);-webkit-text-stroke:0.22px #333;">Passédat</span>
<span class="t" style="top:103.625px;font-size:6.6px;color:#222;left:496px;transform-origin:0 50%;transform:scaleX(0.919);-webkit-text-stroke:0.22px #333;">elec</span>
<span class="t" style="top:103.625px;font-size:6.6px;color:#222;left:555px;transform-origin:0 50%;transform:scaleX(0.819);-webkit-text-stroke:0.22px #333;">LES SORINIÈRES</span>
<span class="t" style="top:103.625px;font-size:6.6px;color:#222;left:355px;width:600px;text-align:center;transform-origin:50% 50%;transform:scaleX(0.921);-webkit-text-stroke:0.22px #333;">07/03/2016 11:34:42</span>
<span class="t" style="top:114.375px;font-size:6.6px;color:#222;right:863px;transform-origin:100% 50%;transform:scaleX(0.892);-webkit-text-stroke:0.22px #333;">31</span>
<span class="t" style="top:114.375px;font-size:6.6px;color:#222;left:163.5px;transform-origin:0 50%;transform:scaleX(0.87);-webkit-text-stroke:0.22px #333;">HABILIS</span>
<span class="t" style="top:114.375px;font-size:6.6px;color:#222;right:761.5px;transform-origin:100% 50%;transform:scaleX(0.865);-webkit-text-stroke:0.22px #333;">18 972,00</span>
<span class="t" style="top:114.375px;font-size:6.6px;color:#222;right:711px;transform-origin:100% 50%;transform:scaleX(0.877);-webkit-text-stroke:0.22px #333;">30,00</span>
<span class="t" style="top:114.375px;font-size:6.6px;color:#222;left:59.5px;width:600px;text-align:center;transform-origin:50% 50%;transform:scaleX(0.943);-webkit-text-stroke:0.22px #333;">04/03/2016</span>
<span class="t" style="top:114.375px;font-size:6.6px;color:#222;left:405.8px;transform-origin:0 50%;transform:scaleX(0.998);-webkit-text-stroke:0.22px #333;">Non</span>
<span class="t" style="top:114.375px;font-size:6.6px;color:#222;left:436.5px;transform-origin:0 50%;transform:scaleX(0.939);-webkit-text-stroke:0.22px #333;">Darroze</span>
<span class="t" style="top:114.375px;font-size:6.6px;color:#222;left:496px;transform-origin:0 50%;transform:scaleX(0.949);-webkit-text-stroke:0.22px #333;">Marché Public</span>
<span class="t" style="top:114.375px;font-size:6.6px;color:#222;left:555px;transform-origin:0 50%;transform:scaleX(0.819);-webkit-text-stroke:0.22px #333;">LES SORINIÈRES</span>
<span class="t" style="top:114.375px;font-size:6.6px;color:#222;left:355px;width:600px;text-align:center;transform-origin:50% 50%;transform:scaleX(0.913);-webkit-text-stroke:0.22px #333;">04/03/2016 16:18:41</span>
<span class="t" style="top:125.125px;font-size:6.6px;color:#222;right:863px;transform-origin:100% 50%;transform:scaleX(0.892);-webkit-text-stroke:0.22px #333;">30</span>
<span class="t" style="top:125.125px;font-size:6.6px;color:#222;left:163.5px;transform-origin:0 50%;transform:scaleX(0.87);-webkit-text-stroke:0.22px #333;">HABILIS</span>
<span class="t" style="top:125.125px;font-size:6.6px;color:#222;right:761.5px;transform-origin:100% 50%;transform:scaleX(0.861);-webkit-text-stroke:0.22px #333;">3 698,89</span>
<span class="t" style="top:125.125px;font-size:6.6px;color:#222;right:711px;transform-origin:100% 50%;transform:scaleX(0.861);-webkit-text-stroke:0.22px #333;">4 768,00</span>
<span class="t" style="top:125.125px;font-size:6.6px;color:#222;left:59.5px;width:600px;text-align:center;transform-origin:50% 50%;transform:scaleX(0.943);-webkit-text-stroke:0.22px #333;">02/03/2016</span>
<span class="t" style="top:125.125px;font-size:6.6px;color:#222;left:405.8px;transform-origin:0 50%;transform:scaleX(0.998);-webkit-text-stroke:0.22px #333;">Non</span>
<span class="t" style="top:125.125px;font-size:6.6px;color:#222;left:436.5px;transform-origin:0 50%;transform:scaleX(0.968);-webkit-text-stroke:0.22px #333;">Loubet</span>
<span class="t" style="top:125.125px;font-size:6.6px;color:#222;left:496px;transform-origin:0 50%;transform:scaleX(0.949);-webkit-text-stroke:0.22px #333;">Marché Public</span>
<span class="t" style="top:125.125px;font-size:6.6px;color:#222;left:555px;transform-origin:0 50%;transform:scaleX(0.819);-webkit-text-stroke:0.22px #333;">LES SORINIÈRES</span>
<span class="t" style="top:125.125px;font-size:6.6px;color:#222;left:355px;width:600px;text-align:center;transform-origin:50% 50%;transform:scaleX(0.913);-webkit-text-stroke:0.22px #333;">02/03/2016 17:28:21</span>
<span class="t" style="top:135.875px;font-size:6.6px;color:#222;right:863px;transform-origin:100% 50%;transform:scaleX(0.892);-webkit-text-stroke:0.22px #333;">29</span>
<span class="t" style="top:135.875px;font-size:6.6px;color:#222;left:163.5px;transform-origin:0 50%;transform:scaleX(0.825);-webkit-text-stroke:0.22px #333;">ALBERT</span>
<span class="t" style="top:135.875px;font-size:6.6px;color:#222;right:761.5px;transform-origin:100% 50%;transform:scaleX(0.861);-webkit-text-stroke:0.22px #333;">5 746,80</span>
<span class="t" style="top:135.875px;font-size:6.6px;color:#222;right:711px;transform-origin:100% 50%;transform:scaleX(0.865);-webkit-text-stroke:0.22px #333;">10 349,60</span>
<span class="t" style="top:135.875px;font-size:6.6px;color:#222;left:59.5px;width:600px;text-align:center;transform-origin:50% 50%;transform:scaleX(0.943);-webkit-text-stroke:0.22px #333;">26/02/2016</span>
<span class="t" style="top:135.875px;font-size:6.6px;color:#222;left:405.8px;transform-origin:0 50%;transform:scaleX(0.998);-webkit-text-stroke:0.22px #333;">Non</span>
<span class="t" style="top:135.875px;font-size:6.6px;color:#222;left:436.5px;transform-origin:0 50%;transform:scaleX(0.896);-webkit-text-stroke:0.22px #333;">Passédat</span>
<span class="t" style="top:135.875px;font-size:6.6px;color:#222;left:496px;transform-origin:0 50%;transform:scaleX(0.957);-webkit-text-stroke:0.22px #333;">Plomberie</span>
<span class="t" style="top:135.875px;font-size:6.6px;color:#222;left:555px;transform-origin:0 50%;transform:scaleX(0.847);-webkit-text-stroke:0.22px #333;">AGENCE</span>
<span class="t" style="top:135.875px;font-size:6.6px;color:#222;left:355px;width:600px;text-align:center;transform-origin:50% 50%;transform:scaleX(0.913);-webkit-text-stroke:0.22px #333;">26/02/2016 16:38:26</span>
<span class="t" style="top:146.625px;font-size:6.6px;color:#222;right:863px;transform-origin:100% 50%;transform:scaleX(0.892);-webkit-text-stroke:0.22px #333;">28</span>
<span class="t" style="top:146.625px;font-size:6.6px;color:#222;left:163.5px;transform-origin:0 50%;transform:scaleX(0.856);-webkit-text-stroke:0.22px #333;">GARNIER</span>
<span class="t" style="top:146.625px;font-size:6.6px;color:#222;right:761.5px;transform-origin:100% 50%;transform:scaleX(0.861);-webkit-text-stroke:0.22px #333;">2 756,50</span>
<span class="t" style="top:146.625px;font-size:6.6px;color:#222;right:711px;transform-origin:100% 50%;transform:scaleX(0.861);-webkit-text-stroke:0.22px #333;">3 630,00</span>
<span class="t" style="top:146.625px;font-size:6.6px;color:#222;left:59.5px;width:600px;text-align:center;transform-origin:50% 50%;transform:scaleX(0.943);-webkit-text-stroke:0.22px #333;">26/02/2016</span>
<span class="t" style="top:146.625px;font-size:6.6px;color:#222;left:405.8px;transform-origin:0 50%;transform:scaleX(0.998);-webkit-text-stroke:0.22px #333;">Non</span>
<span class="t" style="top:146.625px;font-size:6.6px;color:#222;left:436.5px;transform-origin:0 50%;transform:scaleX(0.968);-webkit-text-stroke:0.22px #333;">Loubet</span>
<span class="t" style="top:146.625px;font-size:6.6px;color:#222;left:496px;transform-origin:0 50%;transform:scaleX(0.949);-webkit-text-stroke:0.22px #333;">Marché Public</span>
<span class="t" style="top:146.625px;font-size:6.6px;color:#222;left:555px;transform-origin:0 50%;transform:scaleX(0.819);-webkit-text-stroke:0.22px #333;">LES SORINIÈRES</span>
<span class="t" style="top:146.625px;font-size:6.6px;color:#222;left:355px;width:600px;text-align:center;transform-origin:50% 50%;transform:scaleX(0.921);-webkit-text-stroke:0.22px #333;">26/02/2016 11:44:54</span>
<span class="t" style="top:157.375px;font-size:6.6px;color:#222;right:863px;transform-origin:100% 50%;transform:scaleX(0.892);-webkit-text-stroke:0.22px #333;">27</span>
<span class="t" style="top:157.375px;font-size:6.6px;color:#222;left:163.5px;transform-origin:0 50%;transform:scaleX(0.856);-webkit-text-stroke:0.22px #333;">GARNIER</span>
<span class="t" style="top:157.375px;font-size:6.6px;color:#222;right:761.5px;transform-origin:100% 50%;transform:scaleX(0.865);-webkit-text-stroke:0.22px #333;">15 400,00</span>
<span class="t" style="top:157.375px;font-size:6.6px;color:#222;right:711px;transform-origin:100% 50%;transform:scaleX(0.865);-webkit-text-stroke:0.22px #333;">30 600,00</span>
<span class="t" style="top:157.375px;font-size:6.6px;color:#222;left:59.5px;width:600px;text-align:center;transform-origin:50% 50%;transform:scaleX(0.943);-webkit-text-stroke:0.22px #333;">26/02/2016</span>
<span class="t" style="top:157.375px;font-size:6.6px;color:#222;left:405.8px;transform-origin:0 50%;transform:scaleX(0.998);-webkit-text-stroke:0.22px #333;">Non</span>
<span class="t" style="top:157.375px;font-size:6.6px;color:#222;left:436.5px;transform-origin:0 50%;transform:scaleX(0.939);-webkit-text-stroke:0.22px #333;">Darroze</span>
<span class="t" style="top:157.375px;font-size:6.6px;color:#222;left:496px;transform-origin:0 50%;transform:scaleX(0.964);-webkit-text-stroke:0.22px #333;">renov</span>
<span class="t" style="top:157.375px;font-size:6.6px;color:#222;left:555px;transform-origin:0 50%;transform:scaleX(0.819);-webkit-text-stroke:0.22px #333;">LES SORINIÈRES</span>
<span class="t" style="top:157.375px;font-size:6.6px;color:#222;left:355px;width:600px;text-align:center;transform-origin:50% 50%;transform:scaleX(0.913);-webkit-text-stroke:0.22px #333;">26/02/2016 10:59:05</span>
<span class="t" style="top:168.125px;font-size:6.6px;color:#222;right:863px;transform-origin:100% 50%;transform:scaleX(0.892);-webkit-text-stroke:0.22px #333;">26</span>
<span class="t" style="top:168.125px;font-size:6.6px;color:#222;left:163.5px;transform-origin:0 50%;transform:scaleX(0.856);-webkit-text-stroke:0.22px #333;">GARNIER</span>
<span class="t" style="top:168.125px;font-size:6.6px;color:#222;right:761.5px;transform-origin:100% 50%;transform:scaleX(0.865);-webkit-text-stroke:0.22px #333;">17 000,00</span>
<span class="t" style="top:168.125px;font-size:6.6px;color:#222;right:711px;transform-origin:100% 50%;transform:scaleX(0.865);-webkit-text-stroke:0.22px #333;">33 000,00</span>
<span class="t" style="top:168.125px;font-size:6.6px;color:#222;left:59.5px;width:600px;text-align:center;transform-origin:50% 50%;transform:scaleX(0.943);-webkit-text-stroke:0.22px #333;">26/02/2016</span>
<span class="t" style="top:168.125px;font-size:6.6px;color:#222;left:405.8px;transform-origin:0 50%;transform:scaleX(0.998);-webkit-text-stroke:0.22px #333;">Non</span>
<span class="t" style="top:168.125px;font-size:6.6px;color:#222;left:436.5px;transform-origin:0 50%;transform:scaleX(0.896);-webkit-text-stroke:0.22px #333;">Passédat</span>
<span class="t" style="top:168.125px;font-size:6.6px;color:#222;left:496px;transform-origin:0 50%;transform:scaleX(0.964);-webkit-text-stroke:0.22px #333;">renov</span>
<span class="t" style="top:168.125px;font-size:6.6px;color:#222;left:555px;transform-origin:0 50%;transform:scaleX(0.819);-webkit-text-stroke:0.22px #333;">LES SORINIÈRES</span>
<span class="t" style="top:168.125px;font-size:6.6px;color:#222;left:355px;width:600px;text-align:center;transform-origin:50% 50%;transform:scaleX(0.913);-webkit-text-stroke:0.22px #333;">26/02/2016 10:52:28</span>
<span class="t" style="top:178.875px;font-size:6.6px;color:#222;right:863px;transform-origin:100% 50%;transform:scaleX(0.892);-webkit-text-stroke:0.22px #333;">25</span>
<span class="t" style="top:178.875px;font-size:6.6px;color:#222;left:163.5px;transform-origin:0 50%;transform:scaleX(0.825);-webkit-text-stroke:0.22px #333;">ALBERT</span>
<span class="t" style="top:178.875px;font-size:6.6px;color:#222;right:761.5px;transform-origin:100% 50%;transform:scaleX(0.865);-webkit-text-stroke:0.22px #333;">20 000,00</span>
<span class="t" style="top:178.875px;font-size:6.6px;color:#222;right:711px;transform-origin:100% 50%;transform:scaleX(0.865);-webkit-text-stroke:0.22px #333;">40 000,00</span>
<span class="t" style="top:178.875px;font-size:6.6px;color:#222;left:59.5px;width:600px;text-align:center;transform-origin:50% 50%;transform:scaleX(0.943);-webkit-text-stroke:0.22px #333;">26/02/2016</span>
<span class="t" style="top:178.875px;font-size:6.6px;color:#222;left:405.8px;transform-origin:0 50%;transform:scaleX(0.998);-webkit-text-stroke:0.22px #333;">Non</span>
<span class="t" style="top:178.875px;font-size:6.6px;color:#222;left:436.5px;transform-origin:0 50%;transform:scaleX(0.968);-webkit-text-stroke:0.22px #333;">Loubet</span>
<span class="t" style="top:178.875px;font-size:6.6px;color:#222;left:496px;transform-origin:0 50%;transform:scaleX(0.957);-webkit-text-stroke:0.22px #333;">Plomberie</span>
<span class="t" style="top:178.875px;font-size:6.6px;color:#222;left:555px;transform-origin:0 50%;transform:scaleX(0.819);-webkit-text-stroke:0.22px #333;">LES SORINIÈRES</span>
<span class="t" style="top:178.875px;font-size:6.6px;color:#222;left:355px;width:600px;text-align:center;transform-origin:50% 50%;transform:scaleX(0.913);-webkit-text-stroke:0.22px #333;">26/02/2016 10:31:44</span>
<span class="t" style="top:189.625px;font-size:6.6px;color:#222;right:863px;transform-origin:100% 50%;transform:scaleX(0.892);-webkit-text-stroke:0.22px #333;">24</span>
<span class="t" style="top:189.625px;font-size:6.6px;color:#222;left:163.5px;transform-origin:0 50%;transform:scaleX(0.825);-webkit-text-stroke:0.22px #333;">ALBERT</span>
<span class="t" style="top:189.625px;font-size:6.6px;color:#222;right:761.5px;transform-origin:100% 50%;transform:scaleX(0.861);-webkit-text-stroke:0.22px #333;">2 601,90</span>
<span class="t" style="top:189.625px;font-size:6.6px;color:#222;right:711px;transform-origin:100% 50%;transform:scaleX(0.861);-webkit-text-stroke:0.22px #333;">5 344,50</span>
<span class="t" style="top:189.625px;font-size:6.6px;color:#222;left:59.5px;width:600px;text-align:center;transform-origin:50% 50%;transform:scaleX(0.943);-webkit-text-stroke:0.22px #333;">26/02/2016</span>
<span class="t" style="top:189.625px;font-size:6.6px;color:#222;left:405.8px;transform-origin:0 50%;transform:scaleX(0.998);-webkit-text-stroke:0.22px #333;">Non</span>
<span class="t" style="top:189.625px;font-size:6.6px;color:#222;left:436.5px;transform-origin:0 50%;transform:scaleX(0.896);-webkit-text-stroke:0.22px #333;">Passédat</span>
<span class="t" style="top:189.625px;font-size:6.6px;color:#222;left:496px;transform-origin:0 50%;transform:scaleX(0.957);-webkit-text-stroke:0.22px #333;">Plomberie</span>
<span class="t" style="top:189.625px;font-size:6.6px;color:#222;left:555px;transform-origin:0 50%;transform:scaleX(0.819);-webkit-text-stroke:0.22px #333;">LES SORINIÈRES</span>
<span class="t" style="top:189.625px;font-size:6.6px;color:#222;left:355px;width:600px;text-align:center;transform-origin:50% 50%;transform:scaleX(0.913);-webkit-text-stroke:0.22px #333;">26/02/2016 10:20:34</span>
<span class="t" style="top:200.375px;font-size:6.6px;color:#222;right:863px;transform-origin:100% 50%;transform:scaleX(0.892);-webkit-text-stroke:0.22px #333;">23</span>
<span class="t" style="top:200.375px;font-size:6.6px;color:#222;left:163.5px;transform-origin:0 50%;transform:scaleX(0.825);-webkit-text-stroke:0.22px #333;">ALBERT</span>
<span class="t" style="top:200.375px;font-size:6.6px;color:#222;right:761.5px;transform-origin:100% 50%;transform:scaleX(0.865);-webkit-text-stroke:0.22px #333;">57 593,17</span>
<span class="t" style="top:200.375px;font-size:6.6px;color:#222;right:711px;transform-origin:100% 50%;transform:scaleX(0.865);-webkit-text-stroke:0.22px #333;">70 290,34</span>
<span class="t" style="top:200.375px;font-size:6.6px;color:#222;left:59.5px;width:600px;text-align:center;transform-origin:50% 50%;transform:scaleX(0.943);-webkit-text-stroke:0.22px #333;">22/02/2016</span>
<span class="t" style="top:200.375px;font-size:6.6px;color:#222;left:405.8px;transform-origin:0 50%;transform:scaleX(0.998);-webkit-text-stroke:0.22px #333;">Non</span>
<span class="t" style="top:200.375px;font-size:6.6px;color:#222;left:436.5px;transform-origin:0 50%;transform:scaleX(0.886);-webkit-text-stroke:0.22px #333;">GRATTARD</span>
<span class="t" style="top:200.375px;font-size:6.6px;color:#222;left:496px;transform-origin:0 50%;transform:scaleX(0.817);-webkit-text-stroke:0.22px #333;">TP</span>
<span class="t" style="top:200.375px;font-size:6.6px;color:#222;left:555px;transform-origin:0 50%;transform:scaleX(0.847);-webkit-text-stroke:0.22px #333;">AGENCE</span>
<span class="t" style="top:200.375px;font-size:6.6px;color:#222;left:355px;width:600px;text-align:center;transform-origin:50% 50%;transform:scaleX(0.913);-webkit-text-stroke:0.22px #333;">22/02/2016 17:57:36</span>
<span class="t" style="top:211.125px;font-size:6.6px;color:#222;right:863px;transform-origin:100% 50%;transform:scaleX(0.892);-webkit-text-stroke:0.22px #333;">22</span>
<span class="t" style="top:211.125px;font-size:6.6px;color:#222;left:163.5px;transform-origin:0 50%;transform:scaleX(0.825);-webkit-text-stroke:0.22px #333;">ALBERT</span>
<span class="t" style="top:211.125px;font-size:6.6px;color:#222;right:761.5px;transform-origin:100% 50%;transform:scaleX(0.861);-webkit-text-stroke:0.22px #333;">5 746,80</span>
<span class="t" style="top:211.125px;font-size:6.6px;color:#222;right:711px;transform-origin:100% 50%;transform:scaleX(0.865);-webkit-text-stroke:0.22px #333;">10 349,60</span>
<span class="t" style="top:211.125px;font-size:6.6px;color:#222;left:59.5px;width:600px;text-align:center;transform-origin:50% 50%;transform:scaleX(0.943);-webkit-text-stroke:0.22px #333;">22/02/2016</span>
<span class="t" style="top:211.125px;font-size:6.6px;color:#222;left:405.8px;transform-origin:0 50%;transform:scaleX(0.998);-webkit-text-stroke:0.22px #333;">Non</span>
<span class="t" style="top:211.125px;font-size:6.6px;color:#222;left:436.5px;transform-origin:0 50%;transform:scaleX(0.869);-webkit-text-stroke:0.22px #333;">Bras</span>
<span class="t" style="top:211.125px;font-size:6.6px;color:#222;left:496px;transform-origin:0 50%;transform:scaleX(0.919);-webkit-text-stroke:0.22px #333;">elec</span>
<span class="t" style="top:211.125px;font-size:6.6px;color:#222;left:555px;transform-origin:0 50%;transform:scaleX(0.909);-webkit-text-stroke:0.22px #333;">ORVAULT</span>
<span class="t" style="top:211.125px;font-size:6.6px;color:#222;left:355px;width:600px;text-align:center;transform-origin:50% 50%;transform:scaleX(0.913);-webkit-text-stroke:0.22px #333;">22/02/2016 16:46:06</span>
<span class="t" style="top:221.875px;font-size:6.6px;color:#222;right:863px;transform-origin:100% 50%;transform:scaleX(0.892);-webkit-text-stroke:0.22px #333;">21</span>
<span class="t" style="top:221.875px;font-size:6.6px;color:#222;left:163.5px;transform-origin:0 50%;transform:scaleX(0.825);-webkit-text-stroke:0.22px #333;">ALBERT</span>
<span class="t" style="top:221.875px;font-size:6.6px;color:#222;right:761.5px;transform-origin:100% 50%;transform:scaleX(0.865);-webkit-text-stroke:0.22px #333;">23 451,50</span>
<span class="t" style="top:221.875px;font-size:6.6px;color:#222;right:711px;transform-origin:100% 50%;transform:scaleX(0.865);-webkit-text-stroke:0.22px #333;">19 530,00</span>
<span class="t" style="top:221.875px;font-size:6.6px;color:#222;left:59.5px;width:600px;text-align:center;transform-origin:50% 50%;transform:scaleX(0.943);-webkit-text-stroke:0.22px #333;">22/02/2016</span>
<span class="t" style="top:221.875px;font-size:6.6px;color:#222;left:405.8px;transform-origin:0 50%;transform:scaleX(0.998);-webkit-text-stroke:0.22px #333;">Non</span>
<span class="t" style="top:221.875px;font-size:6.6px;color:#222;left:436.5px;transform-origin:0 50%;transform:scaleX(0.968);-webkit-text-stroke:0.22px #333;">Loubet</span>
<span class="t" style="top:221.875px;font-size:6.6px;color:#222;left:496px;transform-origin:0 50%;transform:scaleX(0.957);-webkit-text-stroke:0.22px #333;">Plomberie</span>
<span class="t" style="top:221.875px;font-size:6.6px;color:#222;left:555px;transform-origin:0 50%;transform:scaleX(0.819);-webkit-text-stroke:0.22px #333;">LES SORINIÈRES</span>
<span class="t" style="top:221.875px;font-size:6.6px;color:#222;left:355px;width:600px;text-align:center;transform-origin:50% 50%;transform:scaleX(0.921);-webkit-text-stroke:0.22px #333;">22/02/2016 16:11:50</span>
<span class="t" style="top:232.625px;font-size:6.6px;color:#222;right:863px;transform-origin:100% 50%;transform:scaleX(0.892);-webkit-text-stroke:0.22px #333;">20</span>
<span class="t" style="top:232.625px;font-size:6.6px;color:#222;left:163.5px;transform-origin:0 50%;transform:scaleX(0.825);-webkit-text-stroke:0.22px #333;">ALBERT</span>
<span class="t" style="top:232.625px;font-size:6.6px;color:#222;right:761.5px;transform-origin:100% 50%;transform:scaleX(0.861);-webkit-text-stroke:0.22px #333;">2 032,60</span>
<span class="t" style="top:232.625px;font-size:6.6px;color:#222;right:711px;transform-origin:100% 50%;transform:scaleX(0.861);-webkit-text-stroke:0.22px #333;">3 015,00</span>
<span class="t" style="top:232.625px;font-size:6.6px;color:#222;left:59.5px;width:600px;text-align:center;transform-origin:50% 50%;transform:scaleX(0.943);-webkit-text-stroke:0.22px #333;">22/02/2016</span>
<span class="t" style="top:232.625px;font-size:6.6px;color:#222;left:405.8px;transform-origin:0 50%;transform:scaleX(0.998);-webkit-text-stroke:0.22px #333;">Non</span>
<span class="t" style="top:232.625px;font-size:6.6px;color:#222;left:436.5px;transform-origin:0 50%;transform:scaleX(0.886);-webkit-text-stroke:0.22px #333;">GRATTARD</span>
<span class="t" style="top:232.625px;font-size:6.6px;color:#222;left:496px;transform-origin:0 50%;transform:scaleX(0.957);-webkit-text-stroke:0.22px #333;">Plomberie</span>
<span class="t" style="top:232.625px;font-size:6.6px;color:#222;left:555px;transform-origin:0 50%;transform:scaleX(0.819);-webkit-text-stroke:0.22px #333;">LES SORINIÈRES</span>
<span class="t" style="top:232.625px;font-size:6.6px;color:#222;left:355px;width:600px;text-align:center;transform-origin:50% 50%;transform:scaleX(0.913);-webkit-text-stroke:0.22px #333;">22/02/2016 15:59:29</span>
<span class="t" style="top:243.375px;font-size:6.6px;color:#222;right:863px;transform-origin:100% 50%;transform:scaleX(0.892);-webkit-text-stroke:0.22px #333;">19</span>
<span class="t" style="top:243.375px;font-size:6.6px;color:#222;left:163.5px;transform-origin:0 50%;transform:scaleX(0.825);-webkit-text-stroke:0.22px #333;">ALBERT</span>
<span class="t" style="top:243.375px;font-size:6.6px;color:#222;right:761.5px;transform-origin:100% 50%;transform:scaleX(0.865);-webkit-text-stroke:0.22px #333;">10 000,00</span>
<span class="t" style="top:243.375px;font-size:6.6px;color:#222;right:711px;transform-origin:100% 50%;transform:scaleX(0.865);-webkit-text-stroke:0.22px #333;">20 000,00</span>
<span class="t" style="top:243.375px;font-size:6.6px;color:#222;left:59.5px;width:600px;text-align:center;transform-origin:50% 50%;transform:scaleX(0.943);-webkit-text-stroke:0.22px #333;">22/02/2016</span>
<span class="t" style="top:243.375px;font-size:6.6px;color:#222;left:405.8px;transform-origin:0 50%;transform:scaleX(0.998);-webkit-text-stroke:0.22px #333;">Non</span>
<span class="t" style="top:243.375px;font-size:6.6px;color:#222;left:436.5px;transform-origin:0 50%;transform:scaleX(0.968);-webkit-text-stroke:0.22px #333;">Loubet</span>
<span class="t" style="top:243.375px;font-size:6.6px;color:#222;left:496px;transform-origin:0 50%;transform:scaleX(0.817);-webkit-text-stroke:0.22px #333;">TP</span>
<span class="t" style="top:243.375px;font-size:6.6px;color:#222;left:555px;transform-origin:0 50%;transform:scaleX(0.847);-webkit-text-stroke:0.22px #333;">AGENCE</span>
<span class="t" style="top:243.375px;font-size:6.6px;color:#222;left:355px;width:600px;text-align:center;transform-origin:50% 50%;transform:scaleX(0.913);-webkit-text-stroke:0.22px #333;">22/02/2016 14:43:27</span>
<span class="t" style="top:254.125px;font-size:6.6px;color:#222;right:863px;transform-origin:100% 50%;transform:scaleX(0.892);-webkit-text-stroke:0.22px #333;">18</span>
<span class="t" style="top:254.125px;font-size:6.6px;color:#222;left:163.5px;transform-origin:0 50%;transform:scaleX(0.825);-webkit-text-stroke:0.22px #333;">ALBERT</span>
<span class="t" style="top:254.125px;font-size:6.6px;color:#222;right:761.5px;transform-origin:100% 50%;transform:scaleX(0.865);-webkit-text-stroke:0.22px #333;">12 000,00</span>
<span class="t" style="top:254.125px;font-size:6.6px;color:#222;right:711px;transform-origin:100% 50%;transform:scaleX(0.865);-webkit-text-stroke:0.22px #333;">24 000,00</span>
<span class="t" style="top:254.125px;font-size:6.6px;color:#222;left:59.5px;width:600px;text-align:center;transform-origin:50% 50%;transform:scaleX(0.943);-webkit-text-stroke:0.22px #333;">22/02/2016</span>
<span class="t" style="top:254.125px;font-size:6.6px;color:#222;left:405.8px;transform-origin:0 50%;transform:scaleX(0.998);-webkit-text-stroke:0.22px #333;">Non</span>
<span class="t" style="top:254.125px;font-size:6.6px;color:#222;left:436.5px;transform-origin:0 50%;transform:scaleX(0.939);-webkit-text-stroke:0.22px #333;">Darroze</span>
<span class="t" style="top:254.125px;font-size:6.6px;color:#222;left:496px;transform-origin:0 50%;transform:scaleX(0.98);-webkit-text-stroke:0.22px #333;">clim</span>
<span class="t" style="top:254.125px;font-size:6.6px;color:#222;left:555px;transform-origin:0 50%;transform:scaleX(0.909);-webkit-text-stroke:0.22px #333;">ORVAULT</span>
<span class="t" style="top:254.125px;font-size:6.6px;color:#222;left:355px;width:600px;text-align:center;transform-origin:50% 50%;transform:scaleX(0.913);-webkit-text-stroke:0.22px #333;">22/02/2016 14:31:51</span>
<span class="t" style="top:264.875px;font-size:6.6px;color:#222;right:863px;transform-origin:100% 50%;transform:scaleX(0.892);-webkit-text-stroke:0.22px #333;">17</span>
<span class="t" style="top:264.875px;font-size:6.6px;color:#222;left:163.5px;transform-origin:0 50%;transform:scaleX(0.825);-webkit-text-stroke:0.22px #333;">ALBERT</span>
<span class="t" style="top:264.875px;font-size:6.6px;color:#222;right:761.5px;transform-origin:100% 50%;transform:scaleX(0.861);-webkit-text-stroke:0.22px #333;">7 176,00</span>
<span class="t" style="top:264.875px;font-size:6.6px;color:#222;right:711px;transform-origin:100% 50%;transform:scaleX(0.865);-webkit-text-stroke:0.22px #333;">14 030,00</span>
<span class="t" style="top:264.875px;font-size:6.6px;color:#222;left:59.5px;width:600px;text-align:center;transform-origin:50% 50%;transform:scaleX(0.943);-webkit-text-stroke:0.22px #333;">22/02/2016</span>
<span class="t" style="top:264.875px;font-size:6.6px;color:#222;left:405.8px;transform-origin:0 50%;transform:scaleX(0.998);-webkit-text-stroke:0.22px #333;">Non</span>
<span class="t" style="top:264.875px;font-size:6.6px;color:#222;left:436.5px;transform-origin:0 50%;transform:scaleX(0.886);-webkit-text-stroke:0.22px #333;">GRATTARD</span>
<span class="t" style="top:264.875px;font-size:6.6px;color:#222;left:496px;transform-origin:0 50%;transform:scaleX(0.919);-webkit-text-stroke:0.22px #333;">elec</span>
<span class="t" style="top:264.875px;font-size:6.6px;color:#222;left:555px;transform-origin:0 50%;transform:scaleX(0.909);-webkit-text-stroke:0.22px #333;">ORVAULT</span>
<span class="t" style="top:264.875px;font-size:6.6px;color:#222;left:355px;width:600px;text-align:center;transform-origin:50% 50%;transform:scaleX(0.913);-webkit-text-stroke:0.22px #333;">22/02/2016 14:27:41</span>
<span class="t" style="top:275.625px;font-size:6.6px;color:#222;right:863px;transform-origin:100% 50%;transform:scaleX(0.892);-webkit-text-stroke:0.22px #333;">16</span>
<span class="t" style="top:275.625px;font-size:6.6px;color:#222;left:163.5px;transform-origin:0 50%;transform:scaleX(0.825);-webkit-text-stroke:0.22px #333;">ALBERT</span>
<span class="t" style="top:275.625px;font-size:6.6px;color:#222;right:761.5px;transform-origin:100% 50%;transform:scaleX(0.865);-webkit-text-stroke:0.22px #333;">12 000,00</span>
<span class="t" style="top:275.625px;font-size:6.6px;color:#222;right:711px;transform-origin:100% 50%;transform:scaleX(0.865);-webkit-text-stroke:0.22px #333;">24 000,00</span>
<span class="t" style="top:275.625px;font-size:6.6px;color:#222;left:59.5px;width:600px;text-align:center;transform-origin:50% 50%;transform:scaleX(0.943);-webkit-text-stroke:0.22px #333;">22/02/2016</span>
<span class="t" style="top:275.625px;font-size:6.6px;color:#222;left:405.8px;transform-origin:0 50%;transform:scaleX(0.998);-webkit-text-stroke:0.22px #333;">Non</span>
<span class="t" style="top:275.625px;font-size:6.6px;color:#222;left:436.5px;transform-origin:0 50%;transform:scaleX(0.869);-webkit-text-stroke:0.22px #333;">Bras</span>
<span class="t" style="top:275.625px;font-size:6.6px;color:#222;left:496px;transform-origin:0 50%;transform:scaleX(0.957);-webkit-text-stroke:0.22px #333;">Plomberie</span>
<span class="t" style="top:275.625px;font-size:6.6px;color:#222;left:555px;transform-origin:0 50%;transform:scaleX(0.819);-webkit-text-stroke:0.22px #333;">LES SORINIÈRES</span>
<span class="t" style="top:275.625px;font-size:6.6px;color:#222;left:355px;width:600px;text-align:center;transform-origin:50% 50%;transform:scaleX(0.913);-webkit-text-stroke:0.22px #333;">22/02/2016 14:07:10</span>
<span class="t" style="top:286.375px;font-size:6.6px;color:#222;right:863px;transform-origin:100% 50%;transform:scaleX(0.892);-webkit-text-stroke:0.22px #333;">15</span>
<span class="t" style="top:286.375px;font-size:6.6px;color:#222;left:163.5px;transform-origin:0 50%;transform:scaleX(0.825);-webkit-text-stroke:0.22px #333;">ALBERT</span>
<span class="t" style="top:286.375px;font-size:6.6px;color:#222;right:761.5px;transform-origin:100% 50%;transform:scaleX(0.865);-webkit-text-stroke:0.22px #333;">23 000,00</span>
<span class="t" style="top:286.375px;font-size:6.6px;color:#222;right:711px;transform-origin:100% 50%;transform:scaleX(0.865);-webkit-text-stroke:0.22px #333;">42 000,00</span>
<span class="t" style="top:286.375px;font-size:6.6px;color:#222;left:59.5px;width:600px;text-align:center;transform-origin:50% 50%;transform:scaleX(0.943);-webkit-text-stroke:0.22px #333;">22/02/2016</span>
<span class="t" style="top:286.375px;font-size:6.6px;color:#222;left:405.8px;transform-origin:0 50%;transform:scaleX(0.998);-webkit-text-stroke:0.22px #333;">Non</span>
<span class="t" style="top:286.375px;font-size:6.6px;color:#222;left:436.5px;transform-origin:0 50%;transform:scaleX(0.886);-webkit-text-stroke:0.22px #333;">GRATTARD</span>
<span class="t" style="top:286.375px;font-size:6.6px;color:#222;left:496px;transform-origin:0 50%;transform:scaleX(0.985);-webkit-text-stroke:0.22px #333;">peinture</span>
<span class="t" style="top:286.375px;font-size:6.6px;color:#222;left:555px;transform-origin:0 50%;transform:scaleX(0.819);-webkit-text-stroke:0.22px #333;">LES SORINIÈRES</span>
<span class="t" style="top:286.375px;font-size:6.6px;color:#222;left:355px;width:600px;text-align:center;transform-origin:50% 50%;transform:scaleX(0.913);-webkit-text-stroke:0.22px #333;">22/02/2016 13:56:51</span>
<span class="t" style="top:297.125px;font-size:6.6px;color:#222;right:863px;transform-origin:100% 50%;transform:scaleX(0.892);-webkit-text-stroke:0.22px #333;">14</span>
<span class="t" style="top:297.125px;font-size:6.6px;color:#222;left:163.5px;transform-origin:0 50%;transform:scaleX(0.825);-webkit-text-stroke:0.22px #333;">ALBERT</span>
<span class="t" style="top:297.125px;font-size:6.6px;color:#222;right:761.5px;transform-origin:100% 50%;transform:scaleX(0.861);-webkit-text-stroke:0.22px #333;">8 000,00</span>
<span class="t" style="top:297.125px;font-size:6.6px;color:#222;right:711px;transform-origin:100% 50%;transform:scaleX(0.865);-webkit-text-stroke:0.22px #333;">16 000,00</span>
<span class="t" style="top:297.125px;font-size:6.6px;color:#222;left:59.5px;width:600px;text-align:center;transform-origin:50% 50%;transform:scaleX(0.943);-webkit-text-stroke:0.22px #333;">22/02/2016</span>
<span class="t" style="top:297.125px;font-size:6.6px;color:#222;left:405.8px;transform-origin:0 50%;transform:scaleX(0.998);-webkit-text-stroke:0.22px #333;">Non</span>
<span class="t" style="top:297.125px;font-size:6.6px;color:#222;left:436.5px;transform-origin:0 50%;transform:scaleX(0.886);-webkit-text-stroke:0.22px #333;">GRATTARD</span>
<span class="t" style="top:297.125px;font-size:6.6px;color:#222;left:496px;transform-origin:0 50%;transform:scaleX(0.817);-webkit-text-stroke:0.22px #333;">TP</span>
<span class="t" style="top:297.125px;font-size:6.6px;color:#222;left:555px;transform-origin:0 50%;transform:scaleX(0.847);-webkit-text-stroke:0.22px #333;">AGENCE</span>
<span class="t" style="top:297.125px;font-size:6.6px;color:#222;left:355px;width:600px;text-align:center;transform-origin:50% 50%;transform:scaleX(0.913);-webkit-text-stroke:0.22px #333;">22/02/2016 13:51:20</span>
<span class="t" style="top:307.875px;font-size:6.6px;color:#222;right:863px;transform-origin:100% 50%;transform:scaleX(0.892);-webkit-text-stroke:0.22px #333;">13</span>
<span class="t" style="top:307.875px;font-size:6.6px;color:#222;left:163.5px;transform-origin:0 50%;transform:scaleX(0.825);-webkit-text-stroke:0.22px #333;">ALBERT</span>
<span class="t" style="top:307.875px;font-size:6.6px;color:#222;right:761.5px;transform-origin:100% 50%;transform:scaleX(0.861);-webkit-text-stroke:0.22px #333;">8 000,00</span>
<span class="t" style="top:307.875px;font-size:6.6px;color:#222;right:711px;transform-origin:100% 50%;transform:scaleX(0.865);-webkit-text-stroke:0.22px #333;">16 000,00</span>
<span class="t" style="top:307.875px;font-size:6.6px;color:#222;left:59.5px;width:600px;text-align:center;transform-origin:50% 50%;transform:scaleX(0.943);-webkit-text-stroke:0.22px #333;">22/02/2016</span>
<span class="t" style="top:307.875px;font-size:6.6px;color:#222;left:405.8px;transform-origin:0 50%;transform:scaleX(0.998);-webkit-text-stroke:0.22px #333;">Non</span>
<span class="t" style="top:307.875px;font-size:6.6px;color:#222;left:436.5px;transform-origin:0 50%;transform:scaleX(0.939);-webkit-text-stroke:0.22px #333;">Darroze</span>
<span class="t" style="top:307.875px;font-size:6.6px;color:#222;left:496px;transform-origin:0 50%;transform:scaleX(0.958);-webkit-text-stroke:0.22px #333;">charpente</span>
<span class="t" style="top:307.875px;font-size:6.6px;color:#222;left:555px;transform-origin:0 50%;transform:scaleX(0.847);-webkit-text-stroke:0.22px #333;">AGENCE</span>
<span class="t" style="top:307.875px;font-size:6.6px;color:#222;left:355px;width:600px;text-align:center;transform-origin:50% 50%;transform:scaleX(0.913);-webkit-text-stroke:0.22px #333;">22/02/2016 10:12:34</span>
<span class="t" style="top:318.625px;font-size:6.6px;color:#222;right:863px;transform-origin:100% 50%;transform:scaleX(0.892);-webkit-text-stroke:0.22px #333;">12</span>
<span class="t" style="top:318.625px;font-size:6.6px;color:#222;left:163.5px;transform-origin:0 50%;transform:scaleX(0.825);-webkit-text-stroke:0.22px #333;">ALBERT</span>
<span class="t" style="top:318.625px;font-size:6.6px;color:#222;right:761.5px;transform-origin:100% 50%;transform:scaleX(0.877);-webkit-text-stroke:0.22px #333;">2 211,29</span>
<span class="t" style="top:318.625px;font-size:6.6px;color:#222;right:711px;transform-origin:100% 50%;transform:scaleX(0.861);-webkit-text-stroke:0.22px #333;">3 296,58</span>
<span class="t" style="top:318.625px;font-size:6.6px;color:#222;left:59.5px;width:600px;text-align:center;transform-origin:50% 50%;transform:scaleX(0.943);-webkit-text-stroke:0.22px #333;">19/02/2016</span>
<span class="t" style="top:318.625px;font-size:6.6px;color:#222;left:405.8px;transform-origin:0 50%;transform:scaleX(0.998);-webkit-text-stroke:0.22px #333;">Non</span>
<span class="t" style="top:318.625px;font-size:6.6px;color:#222;left:436.5px;transform-origin:0 50%;transform:scaleX(0.869);-webkit-text-stroke:0.22px #333;">Bras</span>
<span class="t" style="top:318.625px;font-size:6.6px;color:#222;left:496px;transform-origin:0 50%;transform:scaleX(0.98);-webkit-text-stroke:0.22px #333;">clim</span>
<span class="t" style="top:318.625px;font-size:6.6px;color:#222;left:555px;transform-origin:0 50%;transform:scaleX(0.909);-webkit-text-stroke:0.22px #333;">ORVAULT</span>
<span class="t" style="top:318.625px;font-size:6.6px;color:#222;left:355px;width:600px;text-align:center;transform-origin:50% 50%;transform:scaleX(0.913);-webkit-text-stroke:0.22px #333;">19/02/2016 17:29:45</span>
<span class="t" style="top:329.375px;font-size:6.6px;color:#222;right:863px;transform-origin:100% 50%;transform:scaleX(0.956);-webkit-text-stroke:0.22px #333;">11</span>
<span class="t" style="top:329.375px;font-size:6.6px;color:#222;left:163.5px;transform-origin:0 50%;transform:scaleX(0.825);-webkit-text-stroke:0.22px #333;">ALBERT</span>
<span class="t" style="top:329.375px;font-size:6.6px;color:#222;right:761.5px;transform-origin:100% 50%;transform:scaleX(0.88);-webkit-text-stroke:0.22px #333;">650,00</span>
<span class="t" style="top:329.375px;font-size:6.6px;color:#222;right:711px;transform-origin:100% 50%;transform:scaleX(0.861);-webkit-text-stroke:0.22px #333;">1 200,00</span>
<span class="t" style="top:329.375px;font-size:6.6px;color:#222;left:59.5px;width:600px;text-align:center;transform-origin:50% 50%;transform:scaleX(0.943);-webkit-text-stroke:0.22px #333;">19/02/2016</span>
<span class="t" style="top:329.375px;font-size:6.6px;color:#222;left:405.8px;transform-origin:0 50%;transform:scaleX(0.998);-webkit-text-stroke:0.22px #333;">Non</span>
<span class="t" style="top:329.375px;font-size:6.6px;color:#222;left:436.5px;transform-origin:0 50%;transform:scaleX(0.886);-webkit-text-stroke:0.22px #333;">GRATTARD</span>
<span class="t" style="top:329.375px;font-size:6.6px;color:#222;left:496px;transform-origin:0 50%;transform:scaleX(0.958);-webkit-text-stroke:0.22px #333;">charpente</span>
<span class="t" style="top:329.375px;font-size:6.6px;color:#222;left:555px;transform-origin:0 50%;transform:scaleX(0.847);-webkit-text-stroke:0.22px #333;">AGENCE</span>
<span class="t" style="top:329.375px;font-size:6.6px;color:#222;left:355px;width:600px;text-align:center;transform-origin:50% 50%;transform:scaleX(0.913);-webkit-text-stroke:0.22px #333;">19/02/2016 16:38:49</span>
<span class="t" style="top:340.125px;font-size:6.6px;color:#222;right:863px;transform-origin:100% 50%;transform:scaleX(0.892);-webkit-text-stroke:0.22px #333;">10</span>
<span class="t" style="top:340.125px;font-size:6.6px;color:#222;left:163.5px;transform-origin:0 50%;transform:scaleX(0.825);-webkit-text-stroke:0.22px #333;">ALBERT</span>
<span class="t" style="top:340.125px;font-size:6.6px;color:#222;right:761.5px;transform-origin:100% 50%;transform:scaleX(0.88);-webkit-text-stroke:0.22px #333;">650,00</span>
<span class="t" style="top:340.125px;font-size:6.6px;color:#222;right:711px;transform-origin:100% 50%;transform:scaleX(0.861);-webkit-text-stroke:0.22px #333;">1 200,00</span>
<span class="t" style="top:340.125px;font-size:6.6px;color:#222;left:59.5px;width:600px;text-align:center;transform-origin:50% 50%;transform:scaleX(0.943);-webkit-text-stroke:0.22px #333;">19/02/2016</span>
<span class="t" style="top:340.125px;font-size:6.6px;color:#222;left:405.8px;transform-origin:0 50%;transform:scaleX(0.998);-webkit-text-stroke:0.22px #333;">Non</span>
<span class="t" style="top:340.125px;font-size:6.6px;color:#222;left:436.5px;transform-origin:0 50%;transform:scaleX(0.869);-webkit-text-stroke:0.22px #333;">Bras</span>
<span class="t" style="top:340.125px;font-size:6.6px;color:#222;left:496px;transform-origin:0 50%;transform:scaleX(0.98);-webkit-text-stroke:0.22px #333;">clim</span>
<span class="t" style="top:340.125px;font-size:6.6px;color:#222;left:555px;transform-origin:0 50%;transform:scaleX(0.847);-webkit-text-stroke:0.22px #333;">AGENCE</span>
<span class="t" style="top:340.125px;font-size:6.6px;color:#222;left:355px;width:600px;text-align:center;transform-origin:50% 50%;transform:scaleX(0.913);-webkit-text-stroke:0.22px #333;">19/02/2016 16:34:46</span>
<span class="t" style="top:350.875px;font-size:6.6px;color:#222;right:863px;transform-origin:100% 50%;transform:scaleX(0.892);-webkit-text-stroke:0.22px #333;">9</span>
<span class="t" style="top:350.875px;font-size:6.6px;color:#222;left:163.5px;transform-origin:0 50%;transform:scaleX(0.825);-webkit-text-stroke:0.22px #333;">ALBERT</span>
<span class="t" style="top:350.875px;font-size:6.6px;color:#222;right:761.5px;transform-origin:100% 50%;transform:scaleX(0.88);-webkit-text-stroke:0.22px #333;">650,00</span>
<span class="t" style="top:350.875px;font-size:6.6px;color:#222;right:711px;transform-origin:100% 50%;transform:scaleX(0.861);-webkit-text-stroke:0.22px #333;">1 200,00</span>
<span class="t" style="top:350.875px;font-size:6.6px;color:#222;left:59.5px;width:600px;text-align:center;transform-origin:50% 50%;transform:scaleX(0.943);-webkit-text-stroke:0.22px #333;">19/02/2016</span>
<span class="t" style="top:350.875px;font-size:6.6px;color:#222;left:405.8px;transform-origin:0 50%;transform:scaleX(0.998);-webkit-text-stroke:0.22px #333;">Non</span>
<span class="t" style="top:350.875px;font-size:6.6px;color:#222;left:436.5px;transform-origin:0 50%;transform:scaleX(0.886);-webkit-text-stroke:0.22px #333;">GRATTARD</span>
<span class="t" style="top:350.875px;font-size:6.6px;color:#222;left:496px;transform-origin:0 50%;transform:scaleX(0.949);-webkit-text-stroke:0.22px #333;">Marché Public</span>
<span class="t" style="top:350.875px;font-size:6.6px;color:#222;left:555px;transform-origin:0 50%;transform:scaleX(0.909);-webkit-text-stroke:0.22px #333;">ORVAULT</span>
<span class="t" style="top:350.875px;font-size:6.6px;color:#222;left:355px;width:600px;text-align:center;transform-origin:50% 50%;transform:scaleX(0.913);-webkit-text-stroke:0.22px #333;">19/02/2016 15:47:40</span>
<span class="t" style="top:361.625px;font-size:6.6px;color:#222;right:863px;transform-origin:100% 50%;transform:scaleX(0.892);-webkit-text-stroke:0.22px #333;">8</span>
<span class="t" style="top:361.625px;font-size:6.6px;color:#222;left:163.5px;transform-origin:0 50%;transform:scaleX(0.825);-webkit-text-stroke:0.22px #333;">ALBERT</span>
<span class="t" style="top:361.625px;font-size:6.6px;color:#222;right:761.5px;transform-origin:100% 50%;transform:scaleX(0.861);-webkit-text-stroke:0.22px #333;">8 321,50</span>
<span class="t" style="top:361.625px;font-size:6.6px;color:#222;right:711px;transform-origin:100% 50%;transform:scaleX(0.879);-webkit-text-stroke:0.22px #333;">11 000,00</span>
<span class="t" style="top:361.625px;font-size:6.6px;color:#222;left:59.5px;width:600px;text-align:center;transform-origin:50% 50%;transform:scaleX(0.943);-webkit-text-stroke:0.22px #333;">10/02/2016</span>
<span class="t" style="top:361.625px;font-size:6.6px;color:#222;left:405.8px;transform-origin:0 50%;transform:scaleX(0.998);-webkit-text-stroke:0.22px #333;">Non</span>
<span class="t" style="top:361.625px;font-size:6.6px;color:#222;left:436.5px;transform-origin:0 50%;transform:scaleX(0.869);-webkit-text-stroke:0.22px #333;">Bras</span>
<span class="t" style="top:361.625px;font-size:6.6px;color:#222;left:496px;transform-origin:0 50%;transform:scaleX(0.98);-webkit-text-stroke:0.22px #333;">clim</span>
<span class="t" style="top:361.625px;font-size:6.6px;color:#222;left:555px;transform-origin:0 50%;transform:scaleX(0.847);-webkit-text-stroke:0.22px #333;">AGENCE</span>
<span class="t" style="top:361.625px;font-size:6.6px;color:#222;left:355px;width:600px;text-align:center;transform-origin:50% 50%;transform:scaleX(0.913);-webkit-text-stroke:0.22px #333;">10/02/2016 15:47:50</span>
<span class="t" style="top:372.375px;font-size:6.6px;color:#222;right:863px;transform-origin:100% 50%;transform:scaleX(0.892);-webkit-text-stroke:0.22px #333;">7</span>
<span class="t" style="top:372.375px;font-size:6.6px;color:#222;left:163.5px;transform-origin:0 50%;transform:scaleX(0.825);-webkit-text-stroke:0.22px #333;">ALBERT</span>
<span class="t" style="top:372.375px;font-size:6.6px;color:#222;right:761.5px;transform-origin:100% 50%;transform:scaleX(0.861);-webkit-text-stroke:0.22px #333;">4 539,00</span>
<span class="t" style="top:372.375px;font-size:6.6px;color:#222;right:711px;transform-origin:100% 50%;transform:scaleX(0.861);-webkit-text-stroke:0.22px #333;">6 109,92</span>
<span class="t" style="top:372.375px;font-size:6.6px;color:#222;left:59.5px;width:600px;text-align:center;transform-origin:50% 50%;transform:scaleX(0.943);-webkit-text-stroke:0.22px #333;">08/02/2016</span>
<span class="t" style="top:372.375px;font-size:6.6px;color:#222;left:405.8px;transform-origin:0 50%;transform:scaleX(0.998);-webkit-text-stroke:0.22px #333;">Non</span>
<span class="t" style="top:372.375px;font-size:6.6px;color:#222;left:436.5px;transform-origin:0 50%;transform:scaleX(0.968);-webkit-text-stroke:0.22px #333;">Loubet</span>
<span class="t" style="top:372.375px;font-size:6.6px;color:#222;left:496px;transform-origin:0 50%;transform:scaleX(0.998);-webkit-text-stroke:0.22px #333;">courant fort</span>
<span class="t" style="top:372.375px;font-size:6.6px;color:#222;left:555px;transform-origin:0 50%;transform:scaleX(0.847);-webkit-text-stroke:0.22px #333;">AGENCE</span>
<span class="t" style="top:372.375px;font-size:6.6px;color:#222;left:355px;width:600px;text-align:center;transform-origin:50% 50%;transform:scaleX(0.913);-webkit-text-stroke:0.22px #333;">08/02/2016 16:05:38</span>
<span class="t" style="top:383.125px;font-size:6.6px;color:#222;right:863px;transform-origin:100% 50%;transform:scaleX(0.892);-webkit-text-stroke:0.22px #333;">6</span>
<span class="t" style="top:383.125px;font-size:6.6px;color:#222;left:163.5px;transform-origin:0 50%;transform:scaleX(0.825);-webkit-text-stroke:0.22px #333;">ALBERT</span>
<span class="t" style="top:383.125px;font-size:6.6px;color:#222;right:761.5px;transform-origin:100% 50%;transform:scaleX(0.861);-webkit-text-stroke:0.22px #333;">3 127,90</span>
<span class="t" style="top:383.125px;font-size:6.6px;color:#222;right:711px;transform-origin:100% 50%;transform:scaleX(0.861);-webkit-text-stroke:0.22px #333;">7 226,09</span>
<span class="t" style="top:383.125px;font-size:6.6px;color:#222;left:59.5px;width:600px;text-align:center;transform-origin:50% 50%;transform:scaleX(0.943);-webkit-text-stroke:0.22px #333;">28/01/2016</span>
<span class="t" style="top:383.125px;font-size:6.6px;color:#222;left:405.8px;transform-origin:0 50%;transform:scaleX(0.998);-webkit-text-stroke:0.22px #333;">Non</span>
<span class="t" style="top:383.125px;font-size:6.6px;color:#222;left:436.5px;transform-origin:0 50%;transform:scaleX(0.869);-webkit-text-stroke:0.22px #333;">Bras</span>
<span class="t" style="top:383.125px;font-size:6.6px;color:#222;left:496px;transform-origin:0 50%;transform:scaleX(0.963);-webkit-text-stroke:0.22px #333;">Courant faible</span>
<span class="t" style="top:383.125px;font-size:6.6px;color:#222;left:555px;transform-origin:0 50%;transform:scaleX(0.847);-webkit-text-stroke:0.22px #333;">AGENCE</span>
<span class="t" style="top:383.125px;font-size:6.6px;color:#222;left:355px;width:600px;text-align:center;transform-origin:50% 50%;transform:scaleX(0.913);-webkit-text-stroke:0.22px #333;">28/01/2016 17:15:53</span>
<span class="t" style="top:393.875px;font-size:6.6px;color:#222;right:863px;transform-origin:100% 50%;transform:scaleX(0.892);-webkit-text-stroke:0.22px #333;">5</span>
<span class="t" style="top:393.875px;font-size:6.6px;color:#222;left:163.5px;transform-origin:0 50%;transform:scaleX(0.825);-webkit-text-stroke:0.22px #333;">ALBERT</span>
<span class="t" style="top:393.875px;font-size:6.6px;color:#222;right:761.5px;transform-origin:100% 50%;transform:scaleX(0.861);-webkit-text-stroke:0.22px #333;">8 162,90</span>
<span class="t" style="top:393.875px;font-size:6.6px;color:#222;right:711px;transform-origin:100% 50%;transform:scaleX(0.865);-webkit-text-stroke:0.22px #333;">17 226,09</span>
<span class="t" style="top:393.875px;font-size:6.6px;color:#222;left:59.5px;width:600px;text-align:center;transform-origin:50% 50%;transform:scaleX(0.943);-webkit-text-stroke:0.22px #333;">28/01/2016</span>
<span class="t" style="top:393.875px;font-size:6.6px;color:#222;left:405.8px;transform-origin:0 50%;transform:scaleX(0.998);-webkit-text-stroke:0.22px #333;">Non</span>
<span class="t" style="top:393.875px;font-size:6.6px;color:#222;left:436.5px;transform-origin:0 50%;transform:scaleX(0.869);-webkit-text-stroke:0.22px #333;">Bras</span>
<span class="t" style="top:393.875px;font-size:6.6px;color:#222;left:496px;transform-origin:0 50%;transform:scaleX(0.974);-webkit-text-stroke:0.22px #333;">courant faible</span>
<span class="t" style="top:393.875px;font-size:6.6px;color:#222;left:555px;transform-origin:0 50%;transform:scaleX(0.847);-webkit-text-stroke:0.22px #333;">AGENCE</span>
<span class="t" style="top:393.875px;font-size:6.6px;color:#222;left:355px;width:600px;text-align:center;transform-origin:50% 50%;transform:scaleX(0.913);-webkit-text-stroke:0.22px #333;">28/01/2016 14:56:52</span>
<span class="t" style="top:404.625px;font-size:6.6px;color:#222;right:863px;transform-origin:100% 50%;transform:scaleX(0.892);-webkit-text-stroke:0.22px #333;">4</span>
<span class="t" style="top:404.625px;font-size:6.6px;color:#222;left:163.5px;transform-origin:0 50%;transform:scaleX(0.825);-webkit-text-stroke:0.22px #333;">ALBERT</span>
<span class="t" style="top:404.625px;font-size:6.6px;color:#222;right:761.5px;transform-origin:100% 50%;transform:scaleX(0.861);-webkit-text-stroke:0.22px #333;">8 259,30</span>
<span class="t" style="top:404.625px;font-size:6.6px;color:#222;right:711px;transform-origin:100% 50%;transform:scaleX(0.865);-webkit-text-stroke:0.22px #333;">18 200,30</span>
<span class="t" style="top:404.625px;font-size:6.6px;color:#222;left:59.5px;width:600px;text-align:center;transform-origin:50% 50%;transform:scaleX(0.943);-webkit-text-stroke:0.22px #333;">27/01/2016</span>
<span class="t" style="top:404.625px;font-size:6.6px;color:#222;left:405.8px;transform-origin:0 50%;transform:scaleX(0.998);-webkit-text-stroke:0.22px #333;">Non</span>
<span class="t" style="top:404.625px;font-size:6.6px;color:#222;left:436.5px;transform-origin:0 50%;transform:scaleX(0.896);-webkit-text-stroke:0.22px #333;">Passédat</span>
<span class="t" style="top:404.625px;font-size:6.6px;color:#222;left:496px;transform-origin:0 50%;transform:scaleX(0.98);-webkit-text-stroke:0.22px #333;">clim</span>
<span class="t" style="top:404.625px;font-size:6.6px;color:#222;left:555px;transform-origin:0 50%;transform:scaleX(0.847);-webkit-text-stroke:0.22px #333;">AGENCE</span>
<span class="t" style="top:404.625px;font-size:6.6px;color:#222;left:355px;width:600px;text-align:center;transform-origin:50% 50%;transform:scaleX(0.913);-webkit-text-stroke:0.22px #333;">27/01/2016 10:51:25</span>
<span class="t" style="top:415.375px;font-size:6.6px;color:#222;right:863px;transform-origin:100% 50%;transform:scaleX(0.892);-webkit-text-stroke:0.22px #333;">3</span>
<span class="t" style="top:415.375px;font-size:6.6px;color:#222;left:163.5px;transform-origin:0 50%;transform:scaleX(0.825);-webkit-text-stroke:0.22px #333;">ALBERT</span>
<span class="t" style="top:415.375px;font-size:6.6px;color:#222;right:761.5px;transform-origin:100% 50%;transform:scaleX(0.861);-webkit-text-stroke:0.22px #333;">2 298,30</span>
<span class="t" style="top:415.375px;font-size:6.6px;color:#222;right:711px;transform-origin:100% 50%;transform:scaleX(0.861);-webkit-text-stroke:0.22px #333;">4 043,10</span>
<span class="t" style="top:415.375px;font-size:6.6px;color:#222;left:59.5px;width:600px;text-align:center;transform-origin:50% 50%;transform:scaleX(0.943);-webkit-text-stroke:0.22px #333;">22/01/2016</span>
<span class="t" style="top:415.375px;font-size:6.6px;color:#222;left:405.8px;transform-origin:0 50%;transform:scaleX(0.998);-webkit-text-stroke:0.22px #333;">Non</span>
<span class="t" style="top:415.375px;font-size:6.6px;color:#222;left:436.5px;transform-origin:0 50%;transform:scaleX(0.939);-webkit-text-stroke:0.22px #333;">Darroze</span>
<span class="t" style="top:415.375px;font-size:6.6px;color:#222;left:496px;transform-origin:0 50%;transform:scaleX(0.985);-webkit-text-stroke:0.22px #333;">peinture</span>
<span class="t" style="top:415.375px;font-size:6.6px;color:#222;left:555px;transform-origin:0 50%;transform:scaleX(0.847);-webkit-text-stroke:0.22px #333;">AGENCE</span>
<span class="t" style="top:415.375px;font-size:6.6px;color:#222;left:355px;width:600px;text-align:center;transform-origin:50% 50%;transform:scaleX(0.913);-webkit-text-stroke:0.22px #333;">22/01/2016 15:35:45</span>
<span class="t" style="top:426.125px;font-size:6.6px;color:#222;right:863px;transform-origin:100% 50%;transform:scaleX(0.892);-webkit-text-stroke:0.22px #333;">2</span>
<span class="t" style="top:426.125px;font-size:6.6px;color:#222;left:163.5px;transform-origin:0 50%;transform:scaleX(0.825);-webkit-text-stroke:0.22px #333;">ALBERT</span>
<span class="t" style="top:426.125px;font-size:6.6px;color:#222;right:761.5px;transform-origin:100% 50%;transform:scaleX(0.872);-webkit-text-stroke:0.22px #333;">0,00</span>
<span class="t" style="top:426.125px;font-size:6.6px;color:#222;right:711px;transform-origin:100% 50%;transform:scaleX(0.872);-webkit-text-stroke:0.22px #333;">0,00</span>
<span class="t" style="top:426.125px;font-size:6.6px;color:#222;left:59.5px;width:600px;text-align:center;transform-origin:50% 50%;transform:scaleX(0.943);-webkit-text-stroke:0.22px #333;">22/01/2016</span>
<span class="t" style="top:426.125px;font-size:6.6px;color:#222;left:405.8px;transform-origin:0 50%;transform:scaleX(0.998);-webkit-text-stroke:0.22px #333;">Non</span>
<span class="t" style="top:426.125px;font-size:6.6px;color:#222;left:436.5px;transform-origin:0 50%;transform:scaleX(0.994);-webkit-text-stroke:0.22px #333;">Trouilloud</span>
<span class="t" style="top:426.125px;font-size:6.6px;color:#222;left:496px;transform-origin:0 50%;transform:scaleX(0.985);-webkit-text-stroke:0.22px #333;">peinture</span>
<span class="t" style="top:426.125px;font-size:6.6px;color:#222;left:555px;transform-origin:0 50%;transform:scaleX(0.819);-webkit-text-stroke:0.22px #333;">LES SORINIÈRES</span>
<span class="t" style="top:426.125px;font-size:6.6px;color:#222;left:355px;width:600px;text-align:center;transform-origin:50% 50%;transform:scaleX(0.913);-webkit-text-stroke:0.22px #333;">22/01/2016 14:59:18</span>
<span class="t" style="top:436.875px;font-size:6.6px;color:#222;right:863px;transform-origin:100% 50%;transform:scaleX(0.892);-webkit-text-stroke:0.22px #333;">1</span>
<span class="t" style="top:436.875px;font-size:6.6px;color:#222;left:163.5px;transform-origin:0 50%;transform:scaleX(0.825);-webkit-text-stroke:0.22px #333;">ALBERT</span>
<span class="t" style="top:436.875px;font-size:6.6px;color:#222;right:761.5px;transform-origin:100% 50%;transform:scaleX(0.861);-webkit-text-stroke:0.22px #333;">1 753,50</span>
<span class="t" style="top:436.875px;font-size:6.6px;color:#222;right:711px;transform-origin:100% 50%;transform:scaleX(0.861);-webkit-text-stroke:0.22px #333;">4 000,00</span>
<span class="t" style="top:436.875px;font-size:6.6px;color:#222;left:59.5px;width:600px;text-align:center;transform-origin:50% 50%;transform:scaleX(0.943);-webkit-text-stroke:0.22px #333;">21/01/2016</span>
<span class="t" style="top:436.875px;font-size:6.6px;color:#222;left:405.8px;transform-origin:0 50%;transform:scaleX(0.998);-webkit-text-stroke:0.22px #333;">Non</span>
<span class="t" style="top:436.875px;font-size:6.6px;color:#222;left:436.5px;transform-origin:0 50%;transform:scaleX(0.968);-webkit-text-stroke:0.22px #333;">Loubet</span>
<span class="t" style="top:436.875px;font-size:6.6px;color:#222;left:496px;transform-origin:0 50%;transform:scaleX(0.981);-webkit-text-stroke:0.22px #333;">isolation</span>
<span class="t" style="top:436.875px;font-size:6.6px;color:#222;left:555px;transform-origin:0 50%;transform:scaleX(0.847);-webkit-text-stroke:0.22px #333;">AGENCE</span>
<span class="t" style="top:436.875px;font-size:6.6px;color:#222;left:355px;width:600px;text-align:center;transform-origin:50% 50%;transform:scaleX(0.913);-webkit-text-stroke:0.22px #333;">21/01/2016 16:47:05</span>
<div style="left:697.8px;top:50px;width:3px;height:449px;background:#484848;"></div>
<div style="left:698.7px;top:282px;width:0.9px;height:8px;background:#8a8a8a;"></div>
<div style="left:700.8px;top:50px;width:312.2px;height:397.5px;background:#cfcfcf;"></div>
<div style="left:702.2px;top:51.5px;width:309.8px;height:16px;background:#666666;"></div>
<div style="left:702.2px;top:67.5px;width:309.4px;height:379px;background:#adadad;"></div>
<div style="left:1013px;top:50px;width:2px;height:449px;background:#3c3c3c;"></div>
<div style="left:704px;top:70px;width:304.8px;height:363.5px;background:#ffffff;box-shadow:0 1px 2.5px rgba(0,0,0,.45)"></div>
<div style="left:700.8px;top:447.5px;width:312.7px;height:51.5px;background:#4a4a4a;"></div>
<div style="left:850px;top:448px;width:12px;height:1px;background:#8a8a8a;"></div>
<div style="left:700.8px;top:463px;width:310.2px;height:1px;background:#333333;"></div>
<div style="left:700.8px;top:464px;width:312.7px;height:35px;background:#555555;"></div>
<svg style="left:702.3px;top:452px" width="8.6" height="8.4" viewBox="0 0 8 8"><rect width="8" height="8" fill="#a2cb3c"/><circle cx="2" cy="6" r=".9" fill="#fff"/><path d="M1.2 3.6A3.2 3.2 0 0 1 4.4 6.8M1.2 1.4A5.4 5.4 0 0 1 6.6 6.8" fill="none" stroke="#fff" stroke-width=".9"/></svg>
<span class="t" style="top:453px;font-size:7.1px;color:#f4f4f4;font-weight:bold;left:713px;transform-origin:0 50%;transform:scaleX(0.944);">Derniers messages</span>
<span class="t" style="top:78.5px;font-size:12.6px;color:#d4b90a;font-weight:bold;left:709.5px;transform-origin:0 50%;transform:scaleX(0.821);">-ELEC</span>
<div style="left:977.5px;top:76px;width:26.2px;height:25.4px;background:#dcbf12;"></div>
<svg style="left:979.5px;top:79px" width="23" height="19" viewBox="0 0 23 19"><g fill="#fffdf0" stroke="#ead76a" stroke-width=".5"><rect x="2.75" y="3.25" width="9.5" height="11.5" transform="rotate(-18 7.5 9)"/><rect x="11.5" y="4.75" width="10" height="11.5" transform="rotate(12 16.5 10.5)"/><rect x="6.75" y="5.5" width="9.5" height="11" transform="rotate(-5 11.5 11)"/></g></svg>
<div style="left:709.6px;top:109.3px;width:294.1px;height:16.3px;background:#e2e2e2;"></div>
<span class="t" style="top:112.15px;font-size:10.8px;color:#8c8c8c;font-weight:bold;left:715.5px;transform-origin:0 50%;transform:scaleX(0.993);">Portefeuille</span>
<span class="t" style="top:127.8px;font-size:7.3px;color:#333;font-weight:bold;left:715px;transform-origin:0 50%;transform:scaleX(0.951);">GARNIER</span>
<span class="t" style="top:138px;font-size:7.4px;color:#777;left:715px;transform-origin:0 50%;transform:scaleX(0.942);">8 Rue Scribe</span>
<span class="t" style="top:148.4px;font-size:7.4px;color:#777;left:715px;transform-origin:0 50%;transform:scaleX(0.971);">75009 PARIS 09</span>
<svg style="left:774.5px;top:131.2px" width="8" height="6.5" viewBox="0 0 8 6.5"><rect x=".5" y=".5" width="7" height="5.5" rx=".8" fill="#fff" stroke="#222" stroke-width="1"/><path d="M1.8 2L4 3.8L6.2 2M1.8 4.6H6.2" stroke="#222" stroke-width=".7" fill="none"/></svg>
<svg style="left:775px;top:140.5px" width="7.5" height="7.5" viewBox="0 0 8 8"><path d="M1.6 0.3C0.6 0.8 0.2 1.8 0.8 3.2C1.8 5.4 3.4 7 5.4 7.7C6.6 8 7.4 7.4 7.8 6.4L6 5L5 5.8C3.8 5.2 3 4.2 2.4 3L3.2 2Z" fill="#222"/></svg>
<svg style="left:774.5px;top:150px" width="8.5" height="8.5" viewBox="0 0 9 9"><rect x="2" y="0" width="5" height="2.6" fill="#222"/><rect x="0" y="2.4" width="9" height="4.4" rx="1" fill="#222"/><rect x="2" y="5.2" width="5" height="3.8" fill="#222" stroke="#fff" stroke-width=".5"/></svg>
<div style="left:709.6px;top:170px;width:294.1px;height:16px;background:#e2e2e2;"></div>
<span class="t" style="top:172.7px;font-size:10.8px;color:#8c8c8c;font-weight:bold;left:715.5px;transform-origin:0 50%;transform:scaleX(0.999);">Chargé d&#x27;affaire</span>
<span class="t" style="top:188.3px;font-size:7.3px;color:#333;font-weight:bold;left:715px;transform-origin:0 50%;">Passédat Gérald</span>
<div style="left:709.6px;top:210.5px;width:294.1px;height:15.5px;background:#e2e2e2;"></div>
<span class="t" style="top:212.95px;font-size:10.8px;color:#8c8c8c;font-weight:bold;left:715.5px;transform-origin:0 50%;">Avancement</span>
<span class="t" style="top:228.3px;font-size:8.4px;color:#777;right:278px;transform-origin:100% 50%;transform:scaleX(0.92);">Saisie :</span>
<span class="t" style="top:240.7px;font-size:8.4px;color:#777;right:278px;transform-origin:100% 50%;transform:scaleX(0.94);">Calculé :</span>
<div style="left:749.8px;top:230.4px;width:249.7px;height:7.8px;background:#5a5a5a;"></div>
<div style="left:749.8px;top:242.8px;width:249.7px;height:7.9px;background:#5a5a5a;"></div>
<div style="left:750.5px;top:243.3px;width:73.5px;height:6.9px;background:#3b8fe8;"></div>
<span class="t" style="top:228.3px;font-size:6px;color:#fff;left:574.5px;width:600px;text-align:center;transform-origin:50% 50%;transform:scaleX(0.9);">0%</span>
<span class="t" style="top:240.7px;font-size:6px;color:#fff;left:576px;width:600px;text-align:center;transform-origin:50% 50%;transform:scaleX(0.9);">30%</span>
<div style="left:709.6px;top:264.7px;width:294.1px;height:15.7px;background:#e2e2e2;"></div>
<span class="t" style="top:267.25px;font-size:10.8px;color:#8c8c8c;font-weight:bold;left:715.5px;transform-origin:0 50%;transform:scaleX(0.986);">Informations financières</span>
<svg style="left:716px;top:284.5px" width="8" height="8" viewBox="0 0 8 8"><path d="M4 0.6L7.6 7.2H0.4Z" fill="none" stroke="#4a9ab8" stroke-width=".8"/><path d="M4 3V5M4 5.8V6.4" stroke="#4a9ab8" stroke-width=".7"/></svg>
<span class="t" style="top:283px;font-size:6.1px;color:#3d8aa8;font-style:italic;left:726px;transform-origin:0 50%;transform:scaleX(0.95);">En date du 11/03/2016 11:22:01</span>
<span class="t" style="top:294px;font-size:8.7px;color:#7a7a7a;right:139px;transform-origin:100% 50%;transform:scaleX(0.96);">Devis (€) :</span>
<span class="t" style="top:294px;font-size:8.7px;color:#7a7a7a;right:25.2px;transform-origin:100% 50%;transform:scaleX(0.96);">119 950,00</span>
<span class="t" style="top:306.7px;font-size:8.7px;color:#7a7a7a;right:139px;transform-origin:100% 50%;transform:scaleX(0.96);">Marché / Avenant (€) :</span>
<span class="t" style="top:306.7px;font-size:8.7px;color:#7a7a7a;right:25.2px;transform-origin:100% 50%;transform:scaleX(0.96);">72 570,00</span>
<span class="t" style="top:319px;font-size:8.7px;color:#333;font-weight:bold;right:139px;transform-origin:100% 50%;transform:scaleX(0.99);">Facture Client (€) :</span>
<span class="t" style="top:319px;font-size:8.7px;color:#333;font-weight:bold;right:25.2px;transform-origin:100% 50%;transform:scaleX(0.99);">21 771,00</span>
<span class="t" style="top:328.6px;font-size:6.3px;color:#7a7a7a;font-style:italic;right:139px;transform-origin:100% 50%;transform:scaleX(0.97);">Facture Client Payées (€) :</span>
<span class="t" style="top:328.6px;font-size:6.3px;color:#7a7a7a;font-style:italic;right:25.2px;transform-origin:100% 50%;transform:scaleX(0.97);">21 771,00</span>
<div style="left:712px;top:343.7px;width:291px;height:0.8px;background:#9a9a9a;"></div>
<span class="t" style="top:350px;font-size:8.7px;color:#333;font-weight:bold;right:139px;transform-origin:100% 50%;transform:scaleX(0.99);">Total Dépensé (€) :</span>
<span class="t" style="top:350px;font-size:8.7px;color:#333;font-weight:bold;right:25.2px;transform-origin:100% 50%;transform:scaleX(0.99);">3 050,00</span>
<span class="t" style="top:359.9px;font-size:6.3px;color:#7a7a7a;font-style:italic;right:139px;transform-origin:100% 50%;transform:scaleX(0.97);">Commande Fournisseur (€) :</span>
<span class="t" style="top:359.9px;font-size:6.3px;color:#7a7a7a;font-style:italic;right:25.2px;transform-origin:100% 50%;transform:scaleX(0.97);">5 855,00</span>
<span class="t" style="top:368.7px;font-size:6.3px;color:#7a7a7a;font-style:italic;right:139px;transform-origin:100% 50%;transform:scaleX(0.97);">Heures (€) :</span>
<span class="t" style="top:368.7px;font-size:6.3px;color:#7a7a7a;font-style:italic;right:25.2px;transform-origin:100% 50%;transform:scaleX(0.97);">550,00</span>
<span class="t" style="top:377.8px;font-size:6.3px;color:#7a7a7a;font-style:italic;right:139px;transform-origin:100% 50%;transform:scaleX(0.97);">Frais (€) :</span>
<span class="t" style="top:377.8px;font-size:6.3px;color:#7a7a7a;font-style:italic;right:25.2px;transform-origin:100% 50%;transform:scaleX(0.97);">2 500,00</span>
<div style="left:712px;top:392.3px;width:291px;height:0.8px;background:#9a9a9a;"></div>
<span class="t" style="top:399px;font-size:8.7px;color:#333;font-weight:bold;right:139px;transform-origin:100% 50%;transform:scaleX(1.02);">Marge (€) :</span>
<span class="t" style="top:399px;font-size:8.7px;color:#2f9e3f;font-weight:bold;right:25.2px;transform-origin:100% 50%;transform:scaleX(0.99);">12 866,00</span>
<span class="t" style="top:418.4px;font-size:6.1px;color:#d8c34a;font-style:italic;left:556px;width:600px;text-align:center;transform-origin:50% 50%;transform:scaleX(0.95);">Modifiée le : 11/03/2016 par Administrateur</span>
<div style="left:1015px;top:0px;width:9px;height:508px;background:#f0f0f0;"></div>
<div style="left:1016px;top:10px;width:8px;height:411px;background:#c6c6c6;"></div>
<div style="left:0px;top:499px;width:1015px;height:9px;background:#f0f0f0;"></div>
<div style="left:26px;top:499px;width:979px;height:9px;background:#c8c8c8;"></div>
<svg style="left:1017px;top:3px" width="6" height="4" viewBox="0 0 6 4"><path d="M0.5 3.5L3 1L5.5 3.5" fill="none" stroke="#666" stroke-width=".9"/></svg>
<svg style="left:1017px;top:492px" width="6" height="4" viewBox="0 0 6 4"><path d="M0.5 0.5L3 3L5.5 0.5" fill="none" stroke="#666" stroke-width=".9"/></svg>
<svg style="left:3px;top:501px" width="4" height="6" viewBox="0 0 4 6"><path d="M3.5 0.5L1 3L3.5 5.5" fill="none" stroke="#666" stroke-width=".9"/></svg>
<svg style="left:1008px;top:501px" width="4" height="6" viewBox="0 0 4 6"><path d="M0.5 0.5L3 3L0.5 5.5" fill="none" stroke="#666" stroke-width=".9"/></svg>
</div></body></html>
